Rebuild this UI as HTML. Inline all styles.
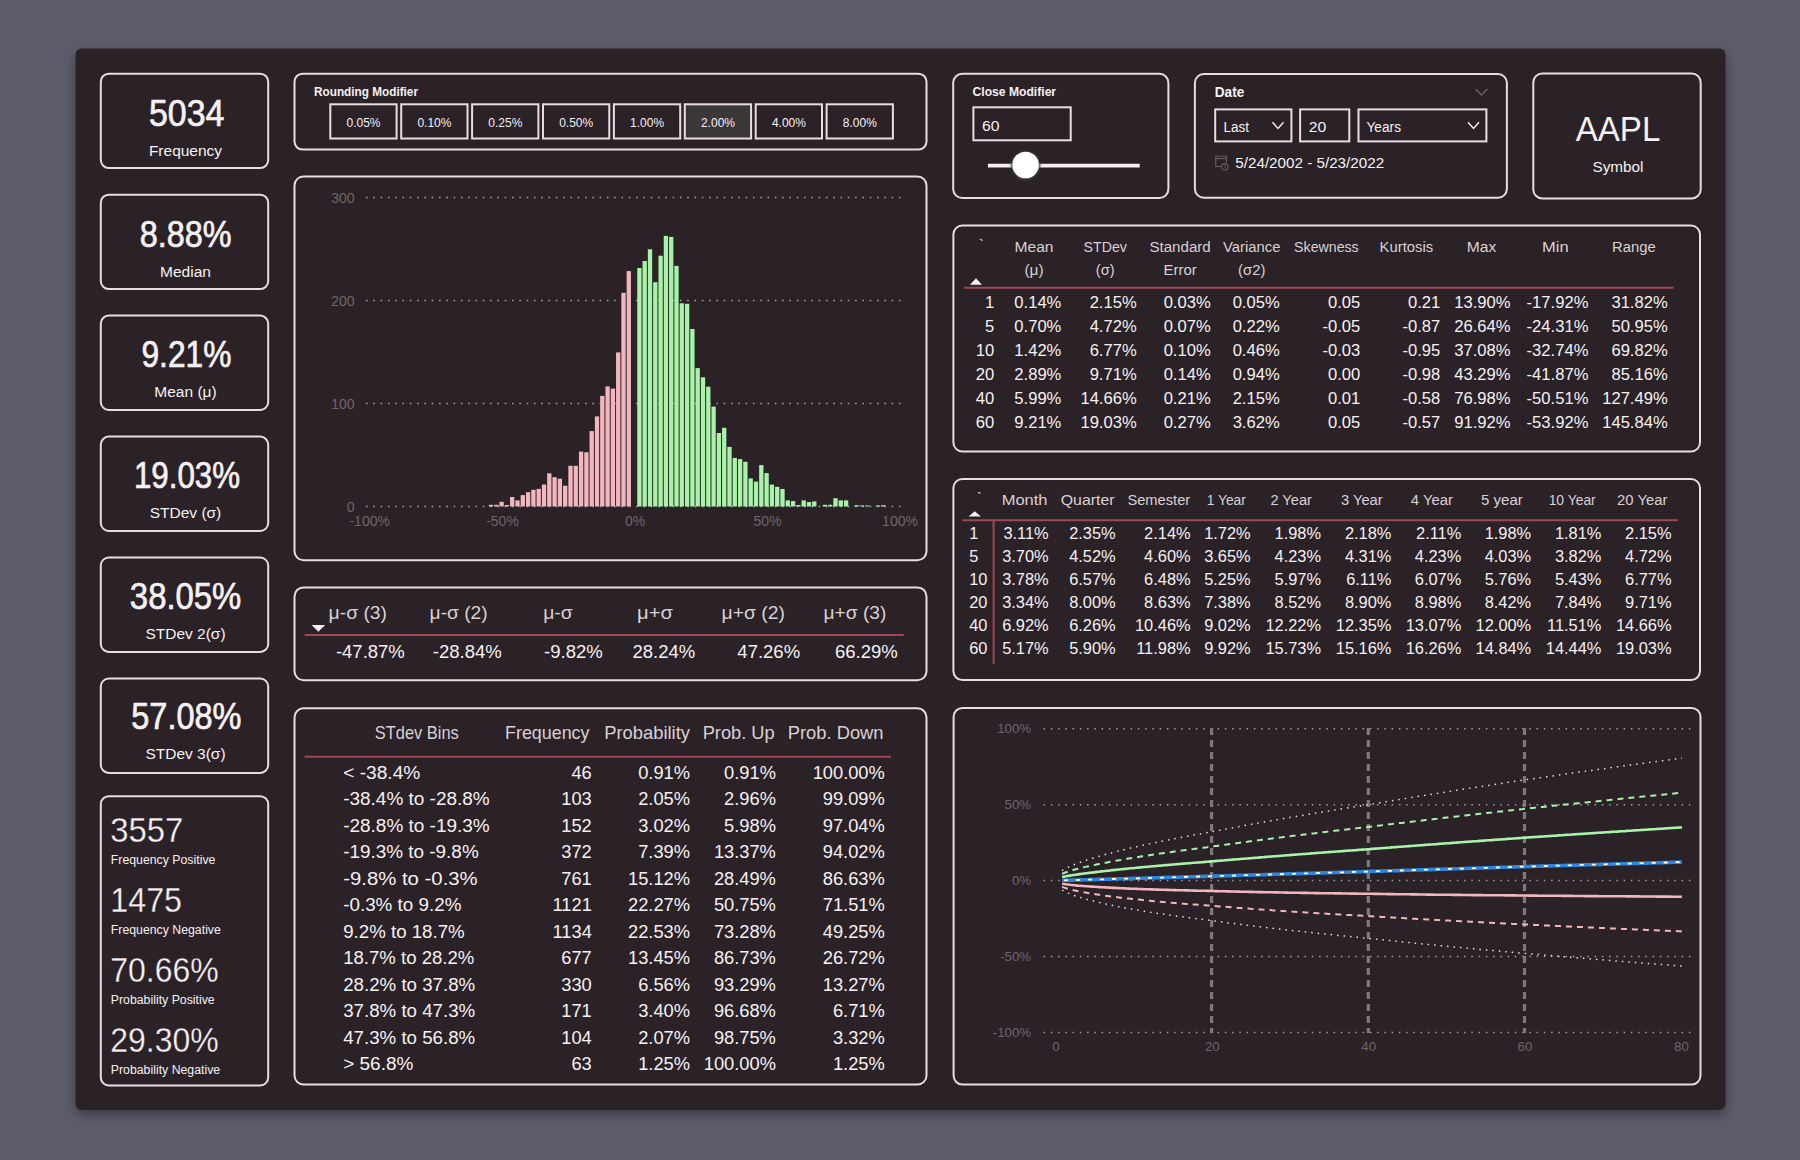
<!DOCTYPE html>
<html><head><meta charset="utf-8"><title>Dashboard</title>
<style>
html,body{margin:0;padding:0;background:#5c5b6a;width:1800px;height:1160px;overflow:hidden}
svg{display:block;font-family:"Liberation Sans",sans-serif}
</style></head><body>
<svg width="1800" height="1160" viewBox="0 0 1800 1160">
<defs><filter id="sh" x="-5%" y="-5%" width="110%" height="115%"><feDropShadow dx="0" dy="5" stdDeviation="6" flood-color="#000" flood-opacity="0.35"/></filter><filter id="bl" x="-30%" y="-30%" width="160%" height="160%"><feGaussianBlur stdDeviation="1.3"/></filter></defs>
<rect x="75.5" y="48.5" width="1650" height="1061.5" rx="6" fill="#2c2027" filter="url(#sh)"/>
<rect x="100.8" y="73.7" width="167.4" height="94.4" rx="8" fill="none" stroke="#e9dde3" stroke-width="2"/>
<text x="186.7" y="126.0" font-size="36.5" text-anchor="middle" textLength="75.3" lengthAdjust="spacingAndGlyphs" fill="#f6f1f4" stroke="#f6f1f4" stroke-width="0.7">5034</text>
<text x="185.5" y="156.0" font-size="15.5" text-anchor="middle" fill="#f6f1f4">Frequency</text>
<rect x="100.8" y="194.7" width="167.4" height="94.4" rx="8" fill="none" stroke="#e9dde3" stroke-width="2"/>
<text x="185.6" y="247.0" font-size="36.5" text-anchor="middle" textLength="91.8" lengthAdjust="spacingAndGlyphs" fill="#f6f1f4" stroke="#f6f1f4" stroke-width="0.7">8.88%</text>
<text x="185.5" y="277.0" font-size="15.5" text-anchor="middle" fill="#f6f1f4">Median</text>
<rect x="100.8" y="315.6" width="167.4" height="94.4" rx="8" fill="none" stroke="#e9dde3" stroke-width="2"/>
<text x="186.4" y="367.2" font-size="36.5" text-anchor="middle" textLength="89.9" lengthAdjust="spacingAndGlyphs" fill="#f6f1f4" stroke="#f6f1f4" stroke-width="0.7">9.21%</text>
<text x="185.5" y="397.2" font-size="15.5" text-anchor="middle" fill="#f6f1f4">Mean (μ)</text>
<rect x="100.8" y="436.6" width="167.4" height="94.4" rx="8" fill="none" stroke="#e9dde3" stroke-width="2"/>
<text x="187.0" y="487.9" font-size="36.5" text-anchor="middle" textLength="106.1" lengthAdjust="spacingAndGlyphs" fill="#f6f1f4" stroke="#f6f1f4" stroke-width="0.7">19.03%</text>
<text x="185.5" y="517.9" font-size="15.5" text-anchor="middle" fill="#f6f1f4">STDev (σ)</text>
<rect x="100.8" y="557.5" width="167.4" height="94.4" rx="8" fill="none" stroke="#e9dde3" stroke-width="2"/>
<text x="185.6" y="608.7" font-size="36.5" text-anchor="middle" textLength="111.5" lengthAdjust="spacingAndGlyphs" fill="#f6f1f4" stroke="#f6f1f4" stroke-width="0.7">38.05%</text>
<text x="185.5" y="638.7" font-size="15.5" text-anchor="middle" fill="#f6f1f4">STDev 2(σ)</text>
<rect x="100.8" y="678.5" width="167.4" height="94.4" rx="8" fill="none" stroke="#e9dde3" stroke-width="2"/>
<text x="186.4" y="729.0" font-size="36.5" text-anchor="middle" textLength="110.2" lengthAdjust="spacingAndGlyphs" fill="#f6f1f4" stroke="#f6f1f4" stroke-width="0.7">57.08%</text>
<text x="185.5" y="759.0" font-size="15.5" text-anchor="middle" fill="#f6f1f4">STDev 3(σ)</text>
<rect x="100.8" y="796.2" width="167.4" height="289.3" rx="8" fill="none" stroke="#e9dde3" stroke-width="2"/>
<text x="110.3" y="842.2" font-size="35.5" textLength="73.1" lengthAdjust="spacingAndGlyphs" fill="#f6f1f4" stroke="#2c2027" stroke-width="0.3">3557</text>
<text x="110.8" y="864.0" font-size="12.3" fill="#f6f1f4">Frequency Positive</text>
<text x="110.3" y="912.1" font-size="35.5" textLength="71.7" lengthAdjust="spacingAndGlyphs" fill="#f6f1f4" stroke="#2c2027" stroke-width="0.3">1475</text>
<text x="110.8" y="933.9" font-size="12.3" fill="#f6f1f4">Frequency Negative</text>
<text x="110.3" y="982.0" font-size="35.5" textLength="108.4" lengthAdjust="spacingAndGlyphs" fill="#f6f1f4" stroke="#2c2027" stroke-width="0.3">70.66%</text>
<text x="110.8" y="1003.8" font-size="12.3" fill="#f6f1f4">Probability Positive</text>
<text x="110.3" y="1051.9" font-size="35.5" textLength="108.4" lengthAdjust="spacingAndGlyphs" fill="#f6f1f4" stroke="#2c2027" stroke-width="0.3">29.30%</text>
<text x="110.8" y="1073.7" font-size="12.3" fill="#f6f1f4">Probability Negative</text>
<rect x="294.5" y="73.7" width="632.0" height="75.9" rx="8" fill="none" stroke="#e9dde3" stroke-width="2"/>
<text x="314.0" y="95.7" font-size="13.5" font-weight="bold" textLength="104.0" lengthAdjust="spacingAndGlyphs" fill="#f6f1f4" class="din">Rounding Modifier</text>
<rect x="330.3" y="104.3" width="66.3" height="34.2" fill="none" stroke="#e9dde3" stroke-width="2"/>
<text x="363.5" y="127.2" font-size="13.5" text-anchor="middle" textLength="34.0" lengthAdjust="spacingAndGlyphs" fill="#f6f1f4" class="din">0.05%</text>
<rect x="401.2" y="104.3" width="66.3" height="34.2" fill="none" stroke="#e9dde3" stroke-width="2"/>
<text x="434.4" y="127.2" font-size="13.5" text-anchor="middle" textLength="34.0" lengthAdjust="spacingAndGlyphs" fill="#f6f1f4" class="din">0.10%</text>
<rect x="472.1" y="104.3" width="66.3" height="34.2" fill="none" stroke="#e9dde3" stroke-width="2"/>
<text x="505.3" y="127.2" font-size="13.5" text-anchor="middle" textLength="34.0" lengthAdjust="spacingAndGlyphs" fill="#f6f1f4" class="din">0.25%</text>
<rect x="543.0" y="104.3" width="66.3" height="34.2" fill="none" stroke="#e9dde3" stroke-width="2"/>
<text x="576.2" y="127.2" font-size="13.5" text-anchor="middle" textLength="34.0" lengthAdjust="spacingAndGlyphs" fill="#f6f1f4" class="din">0.50%</text>
<rect x="613.9" y="104.3" width="66.3" height="34.2" fill="none" stroke="#e9dde3" stroke-width="2"/>
<text x="647.1" y="127.2" font-size="13.5" text-anchor="middle" textLength="34.0" lengthAdjust="spacingAndGlyphs" fill="#f6f1f4" class="din">1.00%</text>
<rect x="684.8" y="104.3" width="66.3" height="34.2" fill="#3b3739" stroke="#e9dde3" stroke-width="2"/>
<text x="718.0" y="127.2" font-size="13.5" text-anchor="middle" textLength="34.0" lengthAdjust="spacingAndGlyphs" fill="#f6f1f4" class="din">2.00%</text>
<rect x="755.7" y="104.3" width="66.3" height="34.2" fill="none" stroke="#e9dde3" stroke-width="2"/>
<text x="788.9" y="127.2" font-size="13.5" text-anchor="middle" textLength="34.0" lengthAdjust="spacingAndGlyphs" fill="#f6f1f4" class="din">4.00%</text>
<rect x="826.6" y="104.3" width="66.3" height="34.2" fill="none" stroke="#e9dde3" stroke-width="2"/>
<text x="859.8" y="127.2" font-size="13.5" text-anchor="middle" textLength="34.0" lengthAdjust="spacingAndGlyphs" fill="#f6f1f4" class="din">8.00%</text>
<rect x="953.2" y="73.8" width="215.2" height="124.2" rx="9" fill="none" stroke="#e9dde3" stroke-width="2"/>
<text x="972.6" y="95.8" font-size="13.5" font-weight="bold" textLength="83.5" lengthAdjust="spacingAndGlyphs" fill="#f6f1f4" class="din">Close Modifier</text>
<rect x="973.4" y="107.3" width="97.3" height="33" fill="none" stroke="#e9dde3" stroke-width="2"/>
<text x="982.0" y="130.6" font-size="15.5" textLength="17.5" lengthAdjust="spacingAndGlyphs" fill="#f6f1f4" class="din">60</text>
<line x1="987.9" y1="165.6" x2="1139.7" y2="165.6" stroke="#f6f1f4" stroke-width="3.6"/>
<circle cx="1025.6" cy="165.6" r="14.6" fill="#3e3a3c" filter="url(#bl)"/>
<circle cx="1025.6" cy="165" r="13.3" fill="#ffffff"/>
<rect x="1194.9" y="74.0" width="312.0" height="123.8" rx="9" fill="none" stroke="#e9dde3" stroke-width="2"/>
<text x="1214.8" y="96.9" font-size="14.5" font-weight="bold" textLength="29.5" lengthAdjust="spacingAndGlyphs" fill="#f6f1f4" class="din">Date</text>
<polyline points="1475.5,89 1481.4,95 1487.3,89" fill="none" stroke="#6a6068" stroke-width="1.3"/>
<rect x="1215.2" y="109.4" width="76.2" height="32" fill="none" stroke="#e9dde3" stroke-width="2"/>
<rect x="1300.1" y="109.4" width="49.2" height="32" fill="none" stroke="#e9dde3" stroke-width="2"/>
<rect x="1358.5" y="109.4" width="127.9" height="32" fill="none" stroke="#e9dde3" stroke-width="2"/>
<text x="1223.5" y="131.7" font-size="15.5" textLength="25.5" lengthAdjust="spacingAndGlyphs" fill="#f6f1f4" class="din">Last</text>
<text x="1308.8" y="131.7" font-size="15.5" textLength="17.5" lengthAdjust="spacingAndGlyphs" fill="#f6f1f4" class="din">20</text>
<text x="1366.5" y="131.7" font-size="15.5" textLength="34.5" lengthAdjust="spacingAndGlyphs" fill="#f6f1f4" class="din">Years</text>
<polyline points="1272.5,122.2 1278.0,128.5 1283.5,122.2" fill="none" stroke="#f6f1f4" stroke-width="1.4"/>
<polyline points="1468.0,122.2 1473.5,128.5 1479.0,122.2" fill="none" stroke="#f6f1f4" stroke-width="1.4"/>
<text x="1235.3" y="168.0" font-size="15.5" textLength="148.8" lengthAdjust="spacingAndGlyphs" fill="#f6f1f4" class="din">5/24/2002 - 5/23/2022</text>
<g fill="none" stroke="#6a6068" stroke-width="1.1"><path d="M1223,166.5 H1215.8 V156.3 H1226.4 V162.5"/><line x1="1215.8" y1="158.6" x2="1226.4" y2="158.6"/><circle cx="1224.8" cy="166.8" r="3.2" fill="#2c2027"/><path d="M1224.8,165 V167 L1226,168" stroke-width="0.9"/></g>
<rect x="1533.3" y="73.5" width="167.4" height="124.9" rx="9" fill="none" stroke="#e9dde3" stroke-width="2"/>
<text x="1618.0" y="140.8" font-size="35" text-anchor="middle" textLength="84.7" lengthAdjust="spacingAndGlyphs" fill="#f6f1f4">AAPL</text>
<text x="1618.0" y="171.9" font-size="15.3" text-anchor="middle" textLength="51.1" lengthAdjust="spacingAndGlyphs" fill="#f6f1f4">Symbol</text>
<rect x="294.5" y="176.5" width="632.0" height="383.8" rx="9" fill="none" stroke="#e9dde3" stroke-width="2"/>
<text x="354.5" y="202.7" font-size="14" text-anchor="end" fill="#6f656c">300</text>
<line x1="366" y1="197.5" x2="902" y2="197.5" stroke="#a59ca3" stroke-width="1.6" stroke-dasharray="1.6 5.7"/>
<text x="354.5" y="305.7" font-size="14" text-anchor="end" fill="#6f656c">200</text>
<line x1="366" y1="300.5" x2="902" y2="300.5" stroke="#a59ca3" stroke-width="1.6" stroke-dasharray="1.6 5.7"/>
<text x="354.5" y="408.7" font-size="14" text-anchor="end" fill="#6f656c">100</text>
<line x1="366" y1="403.5" x2="902" y2="403.5" stroke="#a59ca3" stroke-width="1.6" stroke-dasharray="1.6 5.7"/>
<text x="354.5" y="511.7" font-size="14" text-anchor="end" fill="#6f656c">0</text>
<line x1="366" y1="506.5" x2="902" y2="506.5" stroke="#a59ca3" stroke-width="1.6" stroke-dasharray="1.6 5.7"/>
<text x="369.7" y="526.4" font-size="14" text-anchor="middle" fill="#6f656c">-100%</text>
<text x="502.5" y="526.4" font-size="14" text-anchor="middle" fill="#6f656c">-50%</text>
<text x="635.0" y="526.4" font-size="14" text-anchor="middle" fill="#6f656c">0%</text>
<text x="767.5" y="526.4" font-size="14" text-anchor="middle" fill="#6f656c">50%</text>
<text x="900.0" y="526.4" font-size="14" text-anchor="middle" fill="#6f656c">100%</text>
<g><rect x="488.85" y="504.8" width="4.3" height="1.7" fill="#f2b6bf"/><rect x="494.15" y="504.8" width="4.3" height="1.7" fill="#f2b6bf"/><rect x="499.45" y="501.8" width="4.3" height="4.7" fill="#f2b6bf"/><rect x="504.75" y="505.0" width="4.3" height="1.5" fill="#f2b6bf"/><rect x="510.05" y="497.0" width="4.3" height="9.5" fill="#f2b6bf"/><rect x="515.35" y="500.4" width="4.3" height="6.1" fill="#f2b6bf"/><rect x="520.65" y="495.1" width="4.3" height="11.4" fill="#f2b6bf"/><rect x="525.95" y="492.2" width="4.3" height="14.3" fill="#f2b6bf"/><rect x="531.25" y="489.8" width="4.3" height="16.7" fill="#f2b6bf"/><rect x="536.55" y="488.9" width="4.3" height="17.6" fill="#f2b6bf"/><rect x="541.85" y="484.5" width="4.3" height="22.0" fill="#f2b6bf"/><rect x="547.15" y="473.3" width="4.3" height="33.2" fill="#f2b6bf"/><rect x="552.45" y="477.2" width="4.3" height="29.3" fill="#f2b6bf"/><rect x="557.75" y="478.7" width="4.3" height="27.8" fill="#f2b6bf"/><rect x="563.05" y="485.7" width="4.3" height="20.8" fill="#f2b6bf"/><rect x="568.35" y="465.8" width="4.3" height="40.7" fill="#f2b6bf"/><rect x="573.65" y="465.8" width="4.3" height="40.7" fill="#f2b6bf"/><rect x="578.95" y="451.6" width="4.3" height="54.9" fill="#f2b6bf"/><rect x="584.25" y="452.3" width="4.3" height="54.2" fill="#f2b6bf"/><rect x="589.55" y="431.1" width="4.3" height="75.4" fill="#f2b6bf"/><rect x="594.85" y="416.4" width="4.3" height="90.1" fill="#f2b6bf"/><rect x="600.15" y="395.9" width="4.3" height="110.6" fill="#f2b6bf"/><rect x="605.45" y="386.4" width="4.3" height="120.1" fill="#f2b6bf"/><rect x="610.75" y="388.6" width="4.3" height="117.9" fill="#f2b6bf"/><rect x="616.05" y="352.4" width="4.3" height="154.1" fill="#f2b6bf"/><rect x="621.35" y="292.8" width="4.3" height="213.7" fill="#f2b6bf"/><rect x="626.65" y="271.1" width="4.3" height="235.4" fill="#f2b6bf"/><rect x="637.25" y="268.0" width="4.3" height="238.5" fill="#a9f2a9"/><rect x="642.55" y="261.0" width="4.3" height="245.5" fill="#a9f2a9"/><rect x="647.85" y="249.3" width="4.3" height="257.2" fill="#a9f2a9"/><rect x="653.15" y="282.2" width="4.3" height="224.3" fill="#a9f2a9"/><rect x="658.45" y="255.7" width="4.3" height="250.8" fill="#a9f2a9"/><rect x="663.75" y="235.9" width="4.3" height="270.6" fill="#a9f2a9"/><rect x="669.05" y="236.9" width="4.3" height="269.6" fill="#a9f2a9"/><rect x="674.35" y="265.9" width="4.3" height="240.6" fill="#a9f2a9"/><rect x="679.65" y="303.3" width="4.3" height="203.2" fill="#a9f2a9"/><rect x="684.95" y="303.8" width="4.3" height="202.7" fill="#a9f2a9"/><rect x="690.25" y="329.0" width="4.3" height="177.5" fill="#a9f2a9"/><rect x="695.55" y="368.1" width="4.3" height="138.4" fill="#a9f2a9"/><rect x="700.85" y="377.3" width="4.3" height="129.2" fill="#a9f2a9"/><rect x="706.15" y="386.7" width="4.3" height="119.8" fill="#a9f2a9"/><rect x="711.45" y="406.6" width="4.3" height="99.9" fill="#a9f2a9"/><rect x="716.75" y="433.0" width="4.3" height="73.5" fill="#a9f2a9"/><rect x="722.05" y="427.8" width="4.3" height="78.7" fill="#a9f2a9"/><rect x="727.35" y="446.9" width="4.3" height="59.6" fill="#a9f2a9"/><rect x="732.65" y="457.9" width="4.3" height="48.6" fill="#a9f2a9"/><rect x="737.95" y="459.1" width="4.3" height="47.4" fill="#a9f2a9"/><rect x="743.25" y="461.8" width="4.3" height="44.7" fill="#a9f2a9"/><rect x="748.55" y="478.4" width="4.3" height="28.1" fill="#a9f2a9"/><rect x="753.85" y="481.6" width="4.3" height="24.9" fill="#a9f2a9"/><rect x="759.15" y="465.1" width="4.3" height="41.4" fill="#a9f2a9"/><rect x="764.45" y="473.1" width="4.3" height="33.4" fill="#a9f2a9"/><rect x="769.75" y="484.6" width="4.3" height="21.9" fill="#a9f2a9"/><rect x="775.05" y="486.8" width="4.3" height="19.7" fill="#a9f2a9"/><rect x="780.35" y="489.0" width="4.3" height="17.5" fill="#a9f2a9"/><rect x="785.65" y="500.4" width="4.3" height="6.1" fill="#a9f2a9"/><rect x="790.95" y="501.1" width="4.3" height="5.4" fill="#a9f2a9"/><rect x="796.25" y="505.0" width="4.3" height="1.5" fill="#a9f2a9"/><rect x="801.55" y="500.4" width="4.3" height="6.1" fill="#a9f2a9"/><rect x="806.85" y="502.1" width="4.3" height="4.4" fill="#a9f2a9"/><rect x="812.15" y="501.4" width="4.3" height="5.1" fill="#a9f2a9"/><rect x="822.75" y="504.8" width="4.3" height="1.7" fill="#a9f2a9"/><rect x="828.05" y="504.8" width="4.3" height="1.7" fill="#a9f2a9"/><rect x="833.35" y="498.2" width="4.3" height="8.3" fill="#a9f2a9"/><rect x="838.65" y="500.4" width="4.3" height="6.1" fill="#a9f2a9"/><rect x="843.95" y="500.4" width="4.3" height="6.1" fill="#a9f2a9"/><rect x="854.55" y="505.2" width="4.3" height="1.3" fill="#a9f2a9"/><rect x="859.85" y="505.5" width="4.3" height="1.0" fill="#a9f2a9"/><rect x="865.15" y="505.5" width="4.3" height="1.0" fill="#a9f2a9"/><rect x="875.75" y="505.5" width="4.3" height="1.0" fill="#a9f2a9"/><rect x="881.05" y="505.2" width="4.3" height="1.3" fill="#a9f2a9"/></g>
<rect x="294.5" y="587.4" width="632.0" height="92.9" rx="9" fill="none" stroke="#e9dde3" stroke-width="2"/>
<line x1="304.7" y1="635" x2="903.7" y2="635" stroke="#a04656" stroke-width="2"/>
<polygon points="311.6,625 325.2,625 318.4,631.7" fill="#f6f1f4"/>
<text x="328.6" y="618.9" font-size="18.5" textLength="58.4" lengthAdjust="spacingAndGlyphs" fill="#d9d1d5">μ-σ (3)</text>
<text x="429.6" y="618.9" font-size="18.5" textLength="58.1" lengthAdjust="spacingAndGlyphs" fill="#d9d1d5">μ-σ (2)</text>
<text x="543.2" y="618.9" font-size="18.5" textLength="29.5" lengthAdjust="spacingAndGlyphs" fill="#d9d1d5">μ-σ</text>
<text x="637.0" y="618.9" font-size="18.5" textLength="35.9" lengthAdjust="spacingAndGlyphs" fill="#d9d1d5">μ+σ</text>
<text x="721.6" y="618.9" font-size="18.5" textLength="63.3" lengthAdjust="spacingAndGlyphs" fill="#d9d1d5">μ+σ (2)</text>
<text x="823.6" y="618.9" font-size="18.5" textLength="62.7" lengthAdjust="spacingAndGlyphs" fill="#d9d1d5">μ+σ (3)</text>
<text x="404.8" y="658.0" font-size="18.5" text-anchor="end" fill="#f6f1f4">-47.87%</text>
<text x="501.7" y="658.0" font-size="18.5" text-anchor="end" fill="#f6f1f4">-28.84%</text>
<text x="602.7" y="658.0" font-size="18.5" text-anchor="end" fill="#f6f1f4">-9.82%</text>
<text x="695.2" y="658.0" font-size="18.5" text-anchor="end" fill="#f6f1f4">28.24%</text>
<text x="800.1" y="658.0" font-size="18.5" text-anchor="end" fill="#f6f1f4">47.26%</text>
<text x="897.8" y="658.0" font-size="18.5" text-anchor="end" fill="#f6f1f4">66.29%</text>
<rect x="294.5" y="708.3" width="632.0" height="376.2" rx="9" fill="none" stroke="#e9dde3" stroke-width="2"/>
<line x1="304.7" y1="756.8" x2="891" y2="756.8" stroke="#a04656" stroke-width="2"/>
<text x="374.8" y="738.5" font-size="17.8" textLength="84.0" lengthAdjust="spacingAndGlyphs" fill="#d9d1d5">STdev Bins</text>
<text x="505.0" y="738.5" font-size="17.8" textLength="84.5" lengthAdjust="spacingAndGlyphs" fill="#d9d1d5">Frequency</text>
<text x="604.2" y="738.5" font-size="17.8" textLength="85.8" lengthAdjust="spacingAndGlyphs" fill="#d9d1d5">Probability</text>
<text x="702.7" y="738.5" font-size="17.8" textLength="72.0" lengthAdjust="spacingAndGlyphs" fill="#d9d1d5">Prob. Up</text>
<text x="787.7" y="738.5" font-size="17.8" textLength="95.9" lengthAdjust="spacingAndGlyphs" fill="#d9d1d5">Prob. Down</text>
<text x="343.2" y="778.5" font-size="18.3" textLength="77.2" lengthAdjust="spacingAndGlyphs" fill="#f6f1f4">&lt; -38.4%</text>
<text x="591.8" y="778.5" font-size="18.3" text-anchor="end" fill="#f6f1f4">46</text>
<text x="690.0" y="778.5" font-size="18.3" text-anchor="end" fill="#f6f1f4">0.91%</text>
<text x="775.9" y="778.5" font-size="18.3" text-anchor="end" fill="#f6f1f4">0.91%</text>
<text x="884.8" y="778.5" font-size="18.3" text-anchor="end" fill="#f6f1f4">100.00%</text>
<text x="343.2" y="805.0" font-size="18.3" textLength="146.5" lengthAdjust="spacingAndGlyphs" fill="#f6f1f4">-38.4% to -28.8%</text>
<text x="591.8" y="805.0" font-size="18.3" text-anchor="end" fill="#f6f1f4">103</text>
<text x="690.0" y="805.0" font-size="18.3" text-anchor="end" fill="#f6f1f4">2.05%</text>
<text x="775.9" y="805.0" font-size="18.3" text-anchor="end" fill="#f6f1f4">2.96%</text>
<text x="884.8" y="805.0" font-size="18.3" text-anchor="end" fill="#f6f1f4">99.09%</text>
<text x="343.2" y="831.5" font-size="18.3" textLength="146.5" lengthAdjust="spacingAndGlyphs" fill="#f6f1f4">-28.8% to -19.3%</text>
<text x="591.8" y="831.5" font-size="18.3" text-anchor="end" fill="#f6f1f4">152</text>
<text x="690.0" y="831.5" font-size="18.3" text-anchor="end" fill="#f6f1f4">3.02%</text>
<text x="775.9" y="831.5" font-size="18.3" text-anchor="end" fill="#f6f1f4">5.98%</text>
<text x="884.8" y="831.5" font-size="18.3" text-anchor="end" fill="#f6f1f4">97.04%</text>
<text x="343.2" y="858.1" font-size="18.3" textLength="135.5" lengthAdjust="spacingAndGlyphs" fill="#f6f1f4">-19.3% to -9.8%</text>
<text x="591.8" y="858.1" font-size="18.3" text-anchor="end" fill="#f6f1f4">372</text>
<text x="690.0" y="858.1" font-size="18.3" text-anchor="end" fill="#f6f1f4">7.39%</text>
<text x="775.9" y="858.1" font-size="18.3" text-anchor="end" fill="#f6f1f4">13.37%</text>
<text x="884.8" y="858.1" font-size="18.3" text-anchor="end" fill="#f6f1f4">94.02%</text>
<text x="343.2" y="884.6" font-size="18.3" textLength="134.5" lengthAdjust="spacingAndGlyphs" fill="#f6f1f4">-9.8% to -0.3%</text>
<text x="591.8" y="884.6" font-size="18.3" text-anchor="end" fill="#f6f1f4">761</text>
<text x="690.0" y="884.6" font-size="18.3" text-anchor="end" fill="#f6f1f4">15.12%</text>
<text x="775.9" y="884.6" font-size="18.3" text-anchor="end" fill="#f6f1f4">28.49%</text>
<text x="884.8" y="884.6" font-size="18.3" text-anchor="end" fill="#f6f1f4">86.63%</text>
<text x="343.2" y="911.1" font-size="18.3" textLength="118.2" lengthAdjust="spacingAndGlyphs" fill="#f6f1f4">-0.3% to 9.2%</text>
<text x="591.8" y="911.1" font-size="18.3" text-anchor="end" fill="#f6f1f4">1121</text>
<text x="690.0" y="911.1" font-size="18.3" text-anchor="end" fill="#f6f1f4">22.27%</text>
<text x="775.9" y="911.1" font-size="18.3" text-anchor="end" fill="#f6f1f4">50.75%</text>
<text x="884.8" y="911.1" font-size="18.3" text-anchor="end" fill="#f6f1f4">71.51%</text>
<text x="343.2" y="937.6" font-size="18.3" textLength="121.5" lengthAdjust="spacingAndGlyphs" fill="#f6f1f4">9.2% to 18.7%</text>
<text x="591.8" y="937.6" font-size="18.3" text-anchor="end" fill="#f6f1f4">1134</text>
<text x="690.0" y="937.6" font-size="18.3" text-anchor="end" fill="#f6f1f4">22.53%</text>
<text x="775.9" y="937.6" font-size="18.3" text-anchor="end" fill="#f6f1f4">73.28%</text>
<text x="884.8" y="937.6" font-size="18.3" text-anchor="end" fill="#f6f1f4">49.25%</text>
<text x="343.2" y="964.1" font-size="18.3" textLength="131.1" lengthAdjust="spacingAndGlyphs" fill="#f6f1f4">18.7% to 28.2%</text>
<text x="591.8" y="964.1" font-size="18.3" text-anchor="end" fill="#f6f1f4">677</text>
<text x="690.0" y="964.1" font-size="18.3" text-anchor="end" fill="#f6f1f4">13.45%</text>
<text x="775.9" y="964.1" font-size="18.3" text-anchor="end" fill="#f6f1f4">86.73%</text>
<text x="884.8" y="964.1" font-size="18.3" text-anchor="end" fill="#f6f1f4">26.72%</text>
<text x="343.2" y="990.7" font-size="18.3" textLength="132.0" lengthAdjust="spacingAndGlyphs" fill="#f6f1f4">28.2% to 37.8%</text>
<text x="591.8" y="990.7" font-size="18.3" text-anchor="end" fill="#f6f1f4">330</text>
<text x="690.0" y="990.7" font-size="18.3" text-anchor="end" fill="#f6f1f4">6.56%</text>
<text x="775.9" y="990.7" font-size="18.3" text-anchor="end" fill="#f6f1f4">93.29%</text>
<text x="884.8" y="990.7" font-size="18.3" text-anchor="end" fill="#f6f1f4">13.27%</text>
<text x="343.2" y="1017.2" font-size="18.3" textLength="132.0" lengthAdjust="spacingAndGlyphs" fill="#f6f1f4">37.8% to 47.3%</text>
<text x="591.8" y="1017.2" font-size="18.3" text-anchor="end" fill="#f6f1f4">171</text>
<text x="690.0" y="1017.2" font-size="18.3" text-anchor="end" fill="#f6f1f4">3.40%</text>
<text x="775.9" y="1017.2" font-size="18.3" text-anchor="end" fill="#f6f1f4">96.68%</text>
<text x="884.8" y="1017.2" font-size="18.3" text-anchor="end" fill="#f6f1f4">6.71%</text>
<text x="343.2" y="1043.7" font-size="18.3" textLength="132.0" lengthAdjust="spacingAndGlyphs" fill="#f6f1f4">47.3% to 56.8%</text>
<text x="591.8" y="1043.7" font-size="18.3" text-anchor="end" fill="#f6f1f4">104</text>
<text x="690.0" y="1043.7" font-size="18.3" text-anchor="end" fill="#f6f1f4">2.07%</text>
<text x="775.9" y="1043.7" font-size="18.3" text-anchor="end" fill="#f6f1f4">98.75%</text>
<text x="884.8" y="1043.7" font-size="18.3" text-anchor="end" fill="#f6f1f4">3.32%</text>
<text x="343.2" y="1070.2" font-size="18.3" textLength="70.2" lengthAdjust="spacingAndGlyphs" fill="#f6f1f4">&gt; 56.8%</text>
<text x="591.8" y="1070.2" font-size="18.3" text-anchor="end" fill="#f6f1f4">63</text>
<text x="690.0" y="1070.2" font-size="18.3" text-anchor="end" fill="#f6f1f4">1.25%</text>
<text x="775.9" y="1070.2" font-size="18.3" text-anchor="end" fill="#f6f1f4">100.00%</text>
<text x="884.8" y="1070.2" font-size="18.3" text-anchor="end" fill="#f6f1f4">1.25%</text>
<rect x="953.4" y="225.5" width="746.6" height="226.0" rx="9" fill="none" stroke="#e9dde3" stroke-width="2"/>
<line x1="964" y1="287.8" x2="1673.7" y2="287.8" stroke="#a04656" stroke-width="2"/>
<polygon points="969.9,284.7 982,284.7 976,278.3" fill="#f6f1f4"/>
<text x="979.0" y="250.0" font-size="14" fill="#f6f1f4">`</text>
<text x="1034.0" y="252.0" font-size="15.3" text-anchor="middle" textLength="38.9" lengthAdjust="spacingAndGlyphs" fill="#d9d1d5">Mean</text>
<text x="1034.0" y="274.7" font-size="15.3" text-anchor="middle" textLength="19.2" lengthAdjust="spacingAndGlyphs" fill="#d9d1d5">(μ)</text>
<text x="1105.2" y="252.0" font-size="15.3" text-anchor="middle" textLength="43.3" lengthAdjust="spacingAndGlyphs" fill="#d9d1d5">STDev</text>
<text x="1105.2" y="274.7" font-size="15.3" text-anchor="middle" textLength="18.8" lengthAdjust="spacingAndGlyphs" fill="#d9d1d5">(σ)</text>
<text x="1180.1" y="252.0" font-size="15.3" text-anchor="middle" textLength="61.3" lengthAdjust="spacingAndGlyphs" fill="#d9d1d5">Standard</text>
<text x="1180.1" y="274.7" font-size="15.3" text-anchor="middle" textLength="33.2" lengthAdjust="spacingAndGlyphs" fill="#d9d1d5">Error</text>
<text x="1251.7" y="252.0" font-size="15.3" text-anchor="middle" textLength="57.4" lengthAdjust="spacingAndGlyphs" fill="#d9d1d5">Variance</text>
<text x="1251.7" y="274.7" font-size="15.3" text-anchor="middle" textLength="27.3" lengthAdjust="spacingAndGlyphs" fill="#d9d1d5">(σ2)</text>
<text x="1326.4" y="252.0" font-size="15.3" text-anchor="middle" textLength="64.6" lengthAdjust="spacingAndGlyphs" fill="#d9d1d5">Skewness</text>
<text x="1406.4" y="252.0" font-size="15.3" text-anchor="middle" textLength="53.6" lengthAdjust="spacingAndGlyphs" fill="#d9d1d5">Kurtosis</text>
<text x="1481.5" y="252.0" font-size="15.3" text-anchor="middle" textLength="29.5" lengthAdjust="spacingAndGlyphs" fill="#d9d1d5">Max</text>
<text x="1555.4" y="252.0" font-size="15.3" text-anchor="middle" textLength="26.6" lengthAdjust="spacingAndGlyphs" fill="#d9d1d5">Min</text>
<text x="1633.9" y="252.0" font-size="15.3" text-anchor="middle" textLength="43.7" lengthAdjust="spacingAndGlyphs" fill="#d9d1d5">Range</text>
<text x="994.3" y="307.9" font-size="16.6" text-anchor="end" fill="#f6f1f4">1</text>
<text x="1061.4" y="307.9" font-size="16.6" text-anchor="end" fill="#f6f1f4">0.14%</text>
<text x="1136.7" y="307.9" font-size="16.6" text-anchor="end" fill="#f6f1f4">2.15%</text>
<text x="1210.7" y="307.9" font-size="16.6" text-anchor="end" fill="#f6f1f4">0.03%</text>
<text x="1279.7" y="307.9" font-size="16.6" text-anchor="end" fill="#f6f1f4">0.05%</text>
<text x="1360.3" y="307.9" font-size="16.6" text-anchor="end" fill="#f6f1f4">0.05</text>
<text x="1440.3" y="307.9" font-size="16.6" text-anchor="end" fill="#f6f1f4">0.21</text>
<text x="1510.5" y="307.9" font-size="16.6" text-anchor="end" fill="#f6f1f4">13.90%</text>
<text x="1588.4" y="307.9" font-size="16.6" text-anchor="end" fill="#f6f1f4">-17.92%</text>
<text x="1667.7" y="307.9" font-size="16.6" text-anchor="end" fill="#f6f1f4">31.82%</text>
<text x="994.3" y="332.0" font-size="16.6" text-anchor="end" fill="#f6f1f4">5</text>
<text x="1061.4" y="332.0" font-size="16.6" text-anchor="end" fill="#f6f1f4">0.70%</text>
<text x="1136.7" y="332.0" font-size="16.6" text-anchor="end" fill="#f6f1f4">4.72%</text>
<text x="1210.7" y="332.0" font-size="16.6" text-anchor="end" fill="#f6f1f4">0.07%</text>
<text x="1279.7" y="332.0" font-size="16.6" text-anchor="end" fill="#f6f1f4">0.22%</text>
<text x="1360.3" y="332.0" font-size="16.6" text-anchor="end" fill="#f6f1f4">-0.05</text>
<text x="1440.3" y="332.0" font-size="16.6" text-anchor="end" fill="#f6f1f4">-0.87</text>
<text x="1510.5" y="332.0" font-size="16.6" text-anchor="end" fill="#f6f1f4">26.64%</text>
<text x="1588.4" y="332.0" font-size="16.6" text-anchor="end" fill="#f6f1f4">-24.31%</text>
<text x="1667.7" y="332.0" font-size="16.6" text-anchor="end" fill="#f6f1f4">50.95%</text>
<text x="994.3" y="356.0" font-size="16.6" text-anchor="end" fill="#f6f1f4">10</text>
<text x="1061.4" y="356.0" font-size="16.6" text-anchor="end" fill="#f6f1f4">1.42%</text>
<text x="1136.7" y="356.0" font-size="16.6" text-anchor="end" fill="#f6f1f4">6.77%</text>
<text x="1210.7" y="356.0" font-size="16.6" text-anchor="end" fill="#f6f1f4">0.10%</text>
<text x="1279.7" y="356.0" font-size="16.6" text-anchor="end" fill="#f6f1f4">0.46%</text>
<text x="1360.3" y="356.0" font-size="16.6" text-anchor="end" fill="#f6f1f4">-0.03</text>
<text x="1440.3" y="356.0" font-size="16.6" text-anchor="end" fill="#f6f1f4">-0.95</text>
<text x="1510.5" y="356.0" font-size="16.6" text-anchor="end" fill="#f6f1f4">37.08%</text>
<text x="1588.4" y="356.0" font-size="16.6" text-anchor="end" fill="#f6f1f4">-32.74%</text>
<text x="1667.7" y="356.0" font-size="16.6" text-anchor="end" fill="#f6f1f4">69.82%</text>
<text x="994.3" y="380.1" font-size="16.6" text-anchor="end" fill="#f6f1f4">20</text>
<text x="1061.4" y="380.1" font-size="16.6" text-anchor="end" fill="#f6f1f4">2.89%</text>
<text x="1136.7" y="380.1" font-size="16.6" text-anchor="end" fill="#f6f1f4">9.71%</text>
<text x="1210.7" y="380.1" font-size="16.6" text-anchor="end" fill="#f6f1f4">0.14%</text>
<text x="1279.7" y="380.1" font-size="16.6" text-anchor="end" fill="#f6f1f4">0.94%</text>
<text x="1360.3" y="380.1" font-size="16.6" text-anchor="end" fill="#f6f1f4">0.00</text>
<text x="1440.3" y="380.1" font-size="16.6" text-anchor="end" fill="#f6f1f4">-0.98</text>
<text x="1510.5" y="380.1" font-size="16.6" text-anchor="end" fill="#f6f1f4">43.29%</text>
<text x="1588.4" y="380.1" font-size="16.6" text-anchor="end" fill="#f6f1f4">-41.87%</text>
<text x="1667.7" y="380.1" font-size="16.6" text-anchor="end" fill="#f6f1f4">85.16%</text>
<text x="994.3" y="404.2" font-size="16.6" text-anchor="end" fill="#f6f1f4">40</text>
<text x="1061.4" y="404.2" font-size="16.6" text-anchor="end" fill="#f6f1f4">5.99%</text>
<text x="1136.7" y="404.2" font-size="16.6" text-anchor="end" fill="#f6f1f4">14.66%</text>
<text x="1210.7" y="404.2" font-size="16.6" text-anchor="end" fill="#f6f1f4">0.21%</text>
<text x="1279.7" y="404.2" font-size="16.6" text-anchor="end" fill="#f6f1f4">2.15%</text>
<text x="1360.3" y="404.2" font-size="16.6" text-anchor="end" fill="#f6f1f4">0.01</text>
<text x="1440.3" y="404.2" font-size="16.6" text-anchor="end" fill="#f6f1f4">-0.58</text>
<text x="1510.5" y="404.2" font-size="16.6" text-anchor="end" fill="#f6f1f4">76.98%</text>
<text x="1588.4" y="404.2" font-size="16.6" text-anchor="end" fill="#f6f1f4">-50.51%</text>
<text x="1667.7" y="404.2" font-size="16.6" text-anchor="end" fill="#f6f1f4">127.49%</text>
<text x="994.3" y="428.2" font-size="16.6" text-anchor="end" fill="#f6f1f4">60</text>
<text x="1061.4" y="428.2" font-size="16.6" text-anchor="end" fill="#f6f1f4">9.21%</text>
<text x="1136.7" y="428.2" font-size="16.6" text-anchor="end" fill="#f6f1f4">19.03%</text>
<text x="1210.7" y="428.2" font-size="16.6" text-anchor="end" fill="#f6f1f4">0.27%</text>
<text x="1279.7" y="428.2" font-size="16.6" text-anchor="end" fill="#f6f1f4">3.62%</text>
<text x="1360.3" y="428.2" font-size="16.6" text-anchor="end" fill="#f6f1f4">0.05</text>
<text x="1440.3" y="428.2" font-size="16.6" text-anchor="end" fill="#f6f1f4">-0.57</text>
<text x="1510.5" y="428.2" font-size="16.6" text-anchor="end" fill="#f6f1f4">91.92%</text>
<text x="1588.4" y="428.2" font-size="16.6" text-anchor="end" fill="#f6f1f4">-53.92%</text>
<text x="1667.7" y="428.2" font-size="16.6" text-anchor="end" fill="#f6f1f4">145.84%</text>
<rect x="953.4" y="479.0" width="746.6" height="201.1" rx="9" fill="none" stroke="#e9dde3" stroke-width="2"/>
<line x1="962.3" y1="520.2" x2="1678.1" y2="520.2" stroke="#a04656" stroke-width="2"/>
<line x1="993.6" y1="520.2" x2="993.6" y2="664.2" stroke="#a04656" stroke-width="2"/>
<polygon points="968.6,516.4 980.9,516.4 974.75,511.2" fill="#f6f1f4"/>
<text x="977.0" y="503.0" font-size="14" fill="#f6f1f4">`</text>
<text x="1024.6" y="504.8" font-size="15.5" text-anchor="middle" textLength="45.9" lengthAdjust="spacingAndGlyphs" fill="#d9d1d5">Month</text>
<text x="1087.7" y="504.8" font-size="15.5" text-anchor="middle" textLength="53.9" lengthAdjust="spacingAndGlyphs" fill="#d9d1d5">Quarter</text>
<text x="1158.8" y="504.8" font-size="15.5" text-anchor="middle" textLength="62.8" lengthAdjust="spacingAndGlyphs" fill="#d9d1d5">Semester</text>
<text x="1226.3" y="504.8" font-size="15.5" text-anchor="middle" textLength="39.3" lengthAdjust="spacingAndGlyphs" fill="#d9d1d5">1 Year</text>
<text x="1291.2" y="504.8" font-size="15.5" text-anchor="middle" textLength="41.6" lengthAdjust="spacingAndGlyphs" fill="#d9d1d5">2 Year</text>
<text x="1361.8" y="504.8" font-size="15.5" text-anchor="middle" textLength="41.8" lengthAdjust="spacingAndGlyphs" fill="#d9d1d5">3 Year</text>
<text x="1431.9" y="504.8" font-size="15.5" text-anchor="middle" textLength="42.1" lengthAdjust="spacingAndGlyphs" fill="#d9d1d5">4 Year</text>
<text x="1501.9" y="504.8" font-size="15.5" text-anchor="middle" textLength="41.8" lengthAdjust="spacingAndGlyphs" fill="#d9d1d5">5 year</text>
<text x="1572.2" y="504.8" font-size="15.5" text-anchor="middle" textLength="47.1" lengthAdjust="spacingAndGlyphs" fill="#d9d1d5">10 Year</text>
<text x="1642.2" y="504.8" font-size="15.5" text-anchor="middle" textLength="50.4" lengthAdjust="spacingAndGlyphs" fill="#d9d1d5">20 Year</text>
<text x="969.2" y="538.6" font-size="16.4" fill="#f6f1f4">1</text>
<text x="1048.7" y="538.6" font-size="16.4" text-anchor="end" fill="#f6f1f4">3.11%</text>
<text x="1115.7" y="538.6" font-size="16.4" text-anchor="end" fill="#f6f1f4">2.35%</text>
<text x="1190.6" y="538.6" font-size="16.4" text-anchor="end" fill="#f6f1f4">2.14%</text>
<text x="1250.7" y="538.6" font-size="16.4" text-anchor="end" fill="#f6f1f4">1.72%</text>
<text x="1321.0" y="538.6" font-size="16.4" text-anchor="end" fill="#f6f1f4">1.98%</text>
<text x="1391.4" y="538.6" font-size="16.4" text-anchor="end" fill="#f6f1f4">2.18%</text>
<text x="1461.3" y="538.6" font-size="16.4" text-anchor="end" fill="#f6f1f4">2.11%</text>
<text x="1531.2" y="538.6" font-size="16.4" text-anchor="end" fill="#f6f1f4">1.98%</text>
<text x="1601.4" y="538.6" font-size="16.4" text-anchor="end" fill="#f6f1f4">1.81%</text>
<text x="1671.5" y="538.6" font-size="16.4" text-anchor="end" fill="#f6f1f4">2.15%</text>
<text x="969.2" y="561.6" font-size="16.4" fill="#f6f1f4">5</text>
<text x="1048.7" y="561.6" font-size="16.4" text-anchor="end" fill="#f6f1f4">3.70%</text>
<text x="1115.7" y="561.6" font-size="16.4" text-anchor="end" fill="#f6f1f4">4.52%</text>
<text x="1190.6" y="561.6" font-size="16.4" text-anchor="end" fill="#f6f1f4">4.60%</text>
<text x="1250.7" y="561.6" font-size="16.4" text-anchor="end" fill="#f6f1f4">3.65%</text>
<text x="1321.0" y="561.6" font-size="16.4" text-anchor="end" fill="#f6f1f4">4.23%</text>
<text x="1391.4" y="561.6" font-size="16.4" text-anchor="end" fill="#f6f1f4">4.31%</text>
<text x="1461.3" y="561.6" font-size="16.4" text-anchor="end" fill="#f6f1f4">4.23%</text>
<text x="1531.2" y="561.6" font-size="16.4" text-anchor="end" fill="#f6f1f4">4.03%</text>
<text x="1601.4" y="561.6" font-size="16.4" text-anchor="end" fill="#f6f1f4">3.82%</text>
<text x="1671.5" y="561.6" font-size="16.4" text-anchor="end" fill="#f6f1f4">4.72%</text>
<text x="969.2" y="584.6" font-size="16.4" fill="#f6f1f4">10</text>
<text x="1048.7" y="584.6" font-size="16.4" text-anchor="end" fill="#f6f1f4">3.78%</text>
<text x="1115.7" y="584.6" font-size="16.4" text-anchor="end" fill="#f6f1f4">6.57%</text>
<text x="1190.6" y="584.6" font-size="16.4" text-anchor="end" fill="#f6f1f4">6.48%</text>
<text x="1250.7" y="584.6" font-size="16.4" text-anchor="end" fill="#f6f1f4">5.25%</text>
<text x="1321.0" y="584.6" font-size="16.4" text-anchor="end" fill="#f6f1f4">5.97%</text>
<text x="1391.4" y="584.6" font-size="16.4" text-anchor="end" fill="#f6f1f4">6.11%</text>
<text x="1461.3" y="584.6" font-size="16.4" text-anchor="end" fill="#f6f1f4">6.07%</text>
<text x="1531.2" y="584.6" font-size="16.4" text-anchor="end" fill="#f6f1f4">5.76%</text>
<text x="1601.4" y="584.6" font-size="16.4" text-anchor="end" fill="#f6f1f4">5.43%</text>
<text x="1671.5" y="584.6" font-size="16.4" text-anchor="end" fill="#f6f1f4">6.77%</text>
<text x="969.2" y="607.6" font-size="16.4" fill="#f6f1f4">20</text>
<text x="1048.7" y="607.6" font-size="16.4" text-anchor="end" fill="#f6f1f4">3.34%</text>
<text x="1115.7" y="607.6" font-size="16.4" text-anchor="end" fill="#f6f1f4">8.00%</text>
<text x="1190.6" y="607.6" font-size="16.4" text-anchor="end" fill="#f6f1f4">8.63%</text>
<text x="1250.7" y="607.6" font-size="16.4" text-anchor="end" fill="#f6f1f4">7.38%</text>
<text x="1321.0" y="607.6" font-size="16.4" text-anchor="end" fill="#f6f1f4">8.52%</text>
<text x="1391.4" y="607.6" font-size="16.4" text-anchor="end" fill="#f6f1f4">8.90%</text>
<text x="1461.3" y="607.6" font-size="16.4" text-anchor="end" fill="#f6f1f4">8.98%</text>
<text x="1531.2" y="607.6" font-size="16.4" text-anchor="end" fill="#f6f1f4">8.42%</text>
<text x="1601.4" y="607.6" font-size="16.4" text-anchor="end" fill="#f6f1f4">7.84%</text>
<text x="1671.5" y="607.6" font-size="16.4" text-anchor="end" fill="#f6f1f4">9.71%</text>
<text x="969.2" y="630.6" font-size="16.4" fill="#f6f1f4">40</text>
<text x="1048.7" y="630.6" font-size="16.4" text-anchor="end" fill="#f6f1f4">6.92%</text>
<text x="1115.7" y="630.6" font-size="16.4" text-anchor="end" fill="#f6f1f4">6.26%</text>
<text x="1190.6" y="630.6" font-size="16.4" text-anchor="end" fill="#f6f1f4">10.46%</text>
<text x="1250.7" y="630.6" font-size="16.4" text-anchor="end" fill="#f6f1f4">9.02%</text>
<text x="1321.0" y="630.6" font-size="16.4" text-anchor="end" fill="#f6f1f4">12.22%</text>
<text x="1391.4" y="630.6" font-size="16.4" text-anchor="end" fill="#f6f1f4">12.35%</text>
<text x="1461.3" y="630.6" font-size="16.4" text-anchor="end" fill="#f6f1f4">13.07%</text>
<text x="1531.2" y="630.6" font-size="16.4" text-anchor="end" fill="#f6f1f4">12.00%</text>
<text x="1601.4" y="630.6" font-size="16.4" text-anchor="end" fill="#f6f1f4">11.51%</text>
<text x="1671.5" y="630.6" font-size="16.4" text-anchor="end" fill="#f6f1f4">14.66%</text>
<text x="969.2" y="653.6" font-size="16.4" fill="#f6f1f4">60</text>
<text x="1048.7" y="653.6" font-size="16.4" text-anchor="end" fill="#f6f1f4">5.17%</text>
<text x="1115.7" y="653.6" font-size="16.4" text-anchor="end" fill="#f6f1f4">5.90%</text>
<text x="1190.6" y="653.6" font-size="16.4" text-anchor="end" fill="#f6f1f4">11.98%</text>
<text x="1250.7" y="653.6" font-size="16.4" text-anchor="end" fill="#f6f1f4">9.92%</text>
<text x="1321.0" y="653.6" font-size="16.4" text-anchor="end" fill="#f6f1f4">15.73%</text>
<text x="1391.4" y="653.6" font-size="16.4" text-anchor="end" fill="#f6f1f4">15.16%</text>
<text x="1461.3" y="653.6" font-size="16.4" text-anchor="end" fill="#f6f1f4">16.26%</text>
<text x="1531.2" y="653.6" font-size="16.4" text-anchor="end" fill="#f6f1f4">14.84%</text>
<text x="1601.4" y="653.6" font-size="16.4" text-anchor="end" fill="#f6f1f4">14.44%</text>
<text x="1671.5" y="653.6" font-size="16.4" text-anchor="end" fill="#f6f1f4">19.03%</text>
<rect x="953.6" y="707.9" width="746.9" height="376.7" rx="9" fill="none" stroke="#e9dde3" stroke-width="2"/>
<text x="1031.2" y="733.2" font-size="13.3" text-anchor="end" fill="#6f656c">100%</text>
<line x1="1043.6" y1="728.8" x2="1695" y2="728.8" stroke="#a59ca3" stroke-width="1.5" stroke-dasharray="1.5 5.75"/>
<text x="1031.2" y="809.1" font-size="13.3" text-anchor="end" fill="#6f656c">50%</text>
<line x1="1043.6" y1="804.7" x2="1695" y2="804.7" stroke="#a59ca3" stroke-width="1.5" stroke-dasharray="1.5 5.75"/>
<text x="1031.2" y="885.0" font-size="13.3" text-anchor="end" fill="#6f656c">0%</text>
<line x1="1043.6" y1="880.6" x2="1695" y2="880.6" stroke="#a59ca3" stroke-width="1.5" stroke-dasharray="1.5 5.75"/>
<text x="1031.2" y="960.9" font-size="13.3" text-anchor="end" fill="#6f656c">-50%</text>
<line x1="1043.6" y1="956.5" x2="1695" y2="956.5" stroke="#a59ca3" stroke-width="1.5" stroke-dasharray="1.5 5.75"/>
<text x="1031.2" y="1036.8" font-size="13.3" text-anchor="end" fill="#6f656c">-100%</text>
<line x1="1043.6" y1="1032.4" x2="1695" y2="1032.4" stroke="#a59ca3" stroke-width="1.5" stroke-dasharray="1.5 5.75"/>
<text x="1056.0" y="1050.8" font-size="13.3" text-anchor="middle" fill="#6f656c">0</text>
<text x="1212.3" y="1050.8" font-size="13.3" text-anchor="middle" fill="#6f656c">20</text>
<text x="1368.7" y="1050.8" font-size="13.3" text-anchor="middle" fill="#6f656c">40</text>
<text x="1525.0" y="1050.8" font-size="13.3" text-anchor="middle" fill="#6f656c">60</text>
<text x="1681.4" y="1050.8" font-size="13.3" text-anchor="middle" fill="#6f656c">80</text>
<line x1="1211.6" y1="728" x2="1211.6" y2="1033" stroke="#7f777d" stroke-width="3.2" stroke-dasharray="7 5"/>
<line x1="1368.3" y1="728" x2="1368.3" y2="1033" stroke="#7f777d" stroke-width="3.2" stroke-dasharray="7 5"/>
<line x1="1524.5" y1="728" x2="1524.5" y2="1033" stroke="#7f777d" stroke-width="3.2" stroke-dasharray="7 5"/>
<path d="M1062.1,870.6 L1064.1,869.4 L1066.1,868.3 L1068.0,867.3 L1070.0,866.4 L1072.0,865.6 L1073.9,864.7 L1075.9,863.9 L1077.8,863.2 L1079.8,862.5 L1081.8,861.8 L1083.7,861.1 L1085.7,860.4 L1087.6,859.8 L1089.6,859.2 L1091.6,858.6 L1093.5,858.0 L1095.5,857.4 L1097.4,856.8 L1099.4,856.2 L1101.4,855.7 L1103.3,855.1 L1105.3,854.5 L1107.3,854.0 L1109.2,853.5 L1111.2,852.9 L1113.1,852.4 L1115.1,851.9 L1117.1,851.4 L1119.0,850.9 L1121.0,850.4 L1122.9,849.9 L1124.9,849.4 L1126.9,849.0 L1128.8,848.5 L1130.8,848.0 L1132.8,847.6 L1134.7,847.1 L1136.7,846.7 L1138.6,846.2 L1140.6,845.8 L1142.6,845.3 L1144.5,844.9 L1146.5,844.5 L1148.4,844.1 L1150.4,843.6 L1152.4,843.2 L1154.3,842.8 L1156.3,842.4 L1158.2,842.0 L1160.2,841.6 L1162.2,841.2 L1164.1,840.8 L1166.1,840.4 L1168.1,840.0 L1170.0,839.6 L1172.0,839.2 L1173.9,838.8 L1175.9,838.4 L1177.9,838.1 L1179.8,837.7 L1181.8,837.3 L1183.7,836.9 L1185.7,836.6 L1187.7,836.2 L1189.6,835.8 L1191.6,835.5 L1193.5,835.1 L1195.5,834.7 L1197.5,834.4 L1199.4,834.0 L1201.4,833.7 L1203.4,833.3 L1205.3,833.0 L1207.3,832.6 L1209.2,832.3 L1211.2,831.9 L1213.2,831.5 L1215.1,831.2 L1217.1,830.8 L1219.0,830.4 L1221.0,830.0 L1223.0,829.6 L1224.9,829.3 L1226.9,828.9 L1228.9,828.5 L1230.8,828.1 L1232.8,827.8 L1234.7,827.4 L1236.7,827.0 L1238.7,826.7 L1240.6,826.3 L1242.6,825.9 L1244.5,825.6 L1246.5,825.2 L1248.5,824.8 L1250.4,824.5 L1252.4,824.1 L1254.3,823.8 L1256.3,823.4 L1258.3,823.1 L1260.2,822.7 L1262.2,822.4 L1264.2,822.0 L1266.1,821.7 L1268.1,821.3 L1270.0,821.0 L1272.0,820.6 L1274.0,820.3 L1275.9,819.9 L1277.9,819.6 L1279.8,819.2 L1281.8,818.9 L1283.8,818.5 L1285.7,818.2 L1287.7,817.9 L1289.6,817.5 L1291.6,817.2 L1293.6,816.9 L1295.5,816.5 L1297.5,816.2 L1299.5,815.8 L1301.4,815.5 L1303.4,815.2 L1305.3,814.9 L1307.3,814.5 L1309.3,814.2 L1311.2,813.9 L1313.2,813.5 L1315.1,813.2 L1317.1,812.9 L1319.1,812.6 L1321.0,812.2 L1323.0,811.9 L1325.0,811.6 L1326.9,811.3 L1328.9,810.9 L1330.8,810.6 L1332.8,810.3 L1334.8,810.0 L1336.7,809.7 L1338.7,809.3 L1340.6,809.0 L1342.6,808.7 L1344.6,808.4 L1346.5,808.1 L1348.5,807.8 L1350.4,807.4 L1352.4,807.1 L1354.4,806.8 L1356.3,806.5 L1358.3,806.2 L1360.3,805.9 L1362.2,805.6 L1364.2,805.3 L1366.1,805.0 L1368.1,804.6 L1370.1,804.3 L1372.0,804.0 L1374.0,803.7 L1375.9,803.3 L1377.9,803.0 L1379.9,802.7 L1381.8,802.4 L1383.8,802.0 L1385.8,801.7 L1387.7,801.4 L1389.7,801.1 L1391.6,800.7 L1393.6,800.4 L1395.6,800.1 L1397.5,799.8 L1399.5,799.4 L1401.4,799.1 L1403.4,798.8 L1405.4,798.5 L1407.3,798.2 L1409.3,797.9 L1411.2,797.5 L1413.2,797.2 L1415.2,796.9 L1417.1,796.6 L1419.1,796.3 L1421.1,796.0 L1423.0,795.6 L1425.0,795.3 L1426.9,795.0 L1428.9,794.7 L1430.9,794.4 L1432.8,794.1 L1434.8,793.8 L1436.7,793.4 L1438.7,793.1 L1440.7,792.8 L1442.6,792.5 L1444.6,792.2 L1446.5,791.9 L1448.5,791.6 L1450.5,791.3 L1452.4,791.0 L1454.4,790.7 L1456.4,790.3 L1458.3,790.0 L1460.3,789.7 L1462.2,789.4 L1464.2,789.1 L1466.2,788.8 L1468.1,788.5 L1470.1,788.2 L1472.0,787.9 L1474.0,787.6 L1476.0,787.3 L1477.9,787.0 L1479.9,786.7 L1481.9,786.4 L1483.8,786.1 L1485.8,785.8 L1487.7,785.5 L1489.7,785.2 L1491.7,784.9 L1493.6,784.6 L1495.6,784.3 L1497.5,784.0 L1499.5,783.7 L1501.5,783.4 L1503.4,783.1 L1505.4,782.8 L1507.3,782.5 L1509.3,782.2 L1511.3,781.9 L1513.2,781.6 L1515.2,781.3 L1517.2,781.0 L1519.1,780.7 L1521.1,780.4 L1523.0,780.1 L1525.0,779.8 L1527.0,779.5 L1528.9,779.3 L1530.9,779.0 L1532.8,778.7 L1534.8,778.4 L1536.8,778.1 L1538.7,777.8 L1540.7,777.6 L1542.7,777.3 L1544.6,777.0 L1546.6,776.7 L1548.5,776.4 L1550.5,776.2 L1552.5,775.9 L1554.4,775.6 L1556.4,775.3 L1558.3,775.0 L1560.3,774.8 L1562.3,774.5 L1564.2,774.2 L1566.2,773.9 L1568.1,773.7 L1570.1,773.4 L1572.1,773.1 L1574.0,772.8 L1576.0,772.6 L1578.0,772.3 L1579.9,772.0 L1581.9,771.7 L1583.8,771.5 L1585.8,771.2 L1587.8,770.9 L1589.7,770.6 L1591.7,770.4 L1593.6,770.1 L1595.6,769.8 L1597.6,769.5 L1599.5,769.3 L1601.5,769.0 L1603.4,768.7 L1605.4,768.5 L1607.4,768.2 L1609.3,767.9 L1611.3,767.6 L1613.3,767.4 L1615.2,767.1 L1617.2,766.8 L1619.1,766.6 L1621.1,766.3 L1623.1,766.0 L1625.0,765.8 L1627.0,765.5 L1628.9,765.2 L1630.9,765.0 L1632.9,764.7 L1634.8,764.4 L1636.8,764.2 L1638.8,763.9 L1640.7,763.6 L1642.7,763.4 L1644.6,763.1 L1646.6,762.8 L1648.6,762.6 L1650.5,762.3 L1652.5,762.0 L1654.4,761.8 L1656.4,761.5 L1658.4,761.2 L1660.3,761.0 L1662.3,760.7 L1664.2,760.4 L1666.2,760.2 L1668.2,759.9 L1670.1,759.7 L1672.1,759.4 L1674.1,759.1 L1676.0,758.9 L1678.0,758.6 L1679.9,758.3 L1681.9,758.1" fill="none" stroke="#e8e0e5" stroke-width="1.5" stroke-dasharray="1.5 5"/>
<path d="M1062.1,890.2 L1064.1,891.3 L1066.1,892.2 L1068.0,893.1 L1070.0,893.9 L1072.0,894.7 L1073.9,895.4 L1075.9,896.1 L1077.8,896.7 L1079.8,897.3 L1081.8,897.9 L1083.7,898.5 L1085.7,899.0 L1087.6,899.6 L1089.6,900.1 L1091.6,900.6 L1093.5,901.1 L1095.5,901.6 L1097.4,902.0 L1099.4,902.5 L1101.4,903.0 L1103.3,903.4 L1105.3,903.9 L1107.3,904.3 L1109.2,904.7 L1111.2,905.2 L1113.1,905.6 L1115.1,906.0 L1117.1,906.4 L1119.0,906.8 L1121.0,907.1 L1122.9,907.5 L1124.9,907.9 L1126.9,908.3 L1128.8,908.6 L1130.8,909.0 L1132.8,909.3 L1134.7,909.7 L1136.7,910.0 L1138.6,910.3 L1140.6,910.7 L1142.6,911.0 L1144.5,911.3 L1146.5,911.6 L1148.4,911.9 L1150.4,912.3 L1152.4,912.6 L1154.3,912.9 L1156.3,913.2 L1158.2,913.5 L1160.2,913.8 L1162.2,914.0 L1164.1,914.3 L1166.1,914.6 L1168.1,914.9 L1170.0,915.2 L1172.0,915.5 L1173.9,915.7 L1175.9,916.0 L1177.9,916.3 L1179.8,916.5 L1181.8,916.8 L1183.7,917.1 L1185.7,917.3 L1187.7,917.6 L1189.6,917.8 L1191.6,918.1 L1193.5,918.3 L1195.5,918.6 L1197.5,918.8 L1199.4,919.1 L1201.4,919.3 L1203.4,919.5 L1205.3,919.8 L1207.3,920.0 L1209.2,920.3 L1211.2,920.5 L1213.2,920.8 L1215.1,921.0 L1217.1,921.3 L1219.0,921.6 L1221.0,921.8 L1223.0,922.1 L1224.9,922.3 L1226.9,922.6 L1228.9,922.9 L1230.8,923.1 L1232.8,923.4 L1234.7,923.6 L1236.7,923.9 L1238.7,924.1 L1240.6,924.4 L1242.6,924.6 L1244.5,924.9 L1246.5,925.1 L1248.5,925.4 L1250.4,925.6 L1252.4,925.8 L1254.3,926.1 L1256.3,926.3 L1258.3,926.6 L1260.2,926.8 L1262.2,927.0 L1264.2,927.3 L1266.1,927.5 L1268.1,927.7 L1270.0,928.0 L1272.0,928.2 L1274.0,928.4 L1275.9,928.6 L1277.9,928.9 L1279.8,929.1 L1281.8,929.3 L1283.8,929.6 L1285.7,929.8 L1287.7,930.0 L1289.6,930.2 L1291.6,930.4 L1293.6,930.7 L1295.5,930.9 L1297.5,931.1 L1299.5,931.3 L1301.4,931.5 L1303.4,931.7 L1305.3,931.9 L1307.3,932.2 L1309.3,932.4 L1311.2,932.6 L1313.2,932.8 L1315.1,933.0 L1317.1,933.2 L1319.1,933.4 L1321.0,933.6 L1323.0,933.8 L1325.0,934.0 L1326.9,934.2 L1328.9,934.4 L1330.8,934.6 L1332.8,934.8 L1334.8,935.0 L1336.7,935.2 L1338.7,935.4 L1340.6,935.6 L1342.6,935.8 L1344.6,936.0 L1346.5,936.2 L1348.5,936.4 L1350.4,936.6 L1352.4,936.8 L1354.4,937.0 L1356.3,937.2 L1358.3,937.4 L1360.3,937.6 L1362.2,937.8 L1364.2,938.0 L1366.1,938.2 L1368.1,938.3 L1370.1,938.6 L1372.0,938.8 L1374.0,939.0 L1375.9,939.2 L1377.9,939.4 L1379.9,939.6 L1381.8,939.8 L1383.8,940.0 L1385.8,940.2 L1387.7,940.4 L1389.7,940.6 L1391.6,940.8 L1393.6,941.0 L1395.6,941.2 L1397.5,941.4 L1399.5,941.6 L1401.4,941.8 L1403.4,942.0 L1405.4,942.2 L1407.3,942.4 L1409.3,942.6 L1411.2,942.8 L1413.2,943.0 L1415.2,943.2 L1417.1,943.4 L1419.1,943.6 L1421.1,943.8 L1423.0,944.0 L1425.0,944.1 L1426.9,944.3 L1428.9,944.5 L1430.9,944.7 L1432.8,944.9 L1434.8,945.1 L1436.7,945.3 L1438.7,945.5 L1440.7,945.7 L1442.6,945.9 L1444.6,946.0 L1446.5,946.2 L1448.5,946.4 L1450.5,946.6 L1452.4,946.8 L1454.4,947.0 L1456.4,947.2 L1458.3,947.3 L1460.3,947.5 L1462.2,947.7 L1464.2,947.9 L1466.2,948.1 L1468.1,948.3 L1470.1,948.4 L1472.0,948.6 L1474.0,948.8 L1476.0,949.0 L1477.9,949.2 L1479.9,949.4 L1481.9,949.5 L1483.8,949.7 L1485.8,949.9 L1487.7,950.1 L1489.7,950.2 L1491.7,950.4 L1493.6,950.6 L1495.6,950.8 L1497.5,951.0 L1499.5,951.1 L1501.5,951.3 L1503.4,951.5 L1505.4,951.7 L1507.3,951.8 L1509.3,952.0 L1511.3,952.2 L1513.2,952.3 L1515.2,952.5 L1517.2,952.7 L1519.1,952.9 L1521.1,953.0 L1523.0,953.2 L1525.0,953.4 L1527.0,953.5 L1528.9,953.7 L1530.9,953.9 L1532.8,954.1 L1534.8,954.2 L1536.8,954.4 L1538.7,954.6 L1540.7,954.7 L1542.7,954.9 L1544.6,955.1 L1546.6,955.2 L1548.5,955.4 L1550.5,955.6 L1552.5,955.7 L1554.4,955.9 L1556.4,956.1 L1558.3,956.2 L1560.3,956.4 L1562.3,956.6 L1564.2,956.7 L1566.2,956.9 L1568.1,957.0 L1570.1,957.2 L1572.1,957.4 L1574.0,957.5 L1576.0,957.7 L1578.0,957.9 L1579.9,958.0 L1581.9,958.2 L1583.8,958.3 L1585.8,958.5 L1587.8,958.7 L1589.7,958.8 L1591.7,959.0 L1593.6,959.1 L1595.6,959.3 L1597.6,959.5 L1599.5,959.6 L1601.5,959.8 L1603.4,959.9 L1605.4,960.1 L1607.4,960.2 L1609.3,960.4 L1611.3,960.6 L1613.3,960.7 L1615.2,960.9 L1617.2,961.0 L1619.1,961.2 L1621.1,961.3 L1623.1,961.5 L1625.0,961.6 L1627.0,961.8 L1628.9,962.0 L1630.9,962.1 L1632.9,962.3 L1634.8,962.4 L1636.8,962.6 L1638.8,962.7 L1640.7,962.9 L1642.7,963.0 L1644.6,963.2 L1646.6,963.3 L1648.6,963.5 L1650.5,963.6 L1652.5,963.8 L1654.4,963.9 L1656.4,964.1 L1658.4,964.2 L1660.3,964.4 L1662.3,964.5 L1664.2,964.7 L1666.2,964.8 L1668.2,965.0 L1670.1,965.1 L1672.1,965.3 L1674.1,965.4 L1676.0,965.6 L1678.0,965.7 L1679.9,965.9 L1681.9,966.0" fill="none" stroke="#e8e0e5" stroke-width="1.5" stroke-dasharray="1.5 5"/>
<path d="M1062.1,873.9 L1064.1,873.0 L1066.1,872.3 L1068.0,871.6 L1070.0,871.0 L1072.0,870.4 L1073.9,869.8 L1075.9,869.3 L1077.8,868.8 L1079.8,868.3 L1081.8,867.8 L1083.7,867.3 L1085.7,866.9 L1087.6,866.4 L1089.6,866.0 L1091.6,865.6 L1093.5,865.2 L1095.5,864.8 L1097.4,864.3 L1099.4,863.9 L1101.4,863.5 L1103.3,863.1 L1105.3,862.8 L1107.3,862.4 L1109.2,862.0 L1111.2,861.6 L1113.1,861.3 L1115.1,860.9 L1117.1,860.6 L1119.0,860.2 L1121.0,859.9 L1122.9,859.5 L1124.9,859.2 L1126.9,858.8 L1128.8,858.5 L1130.8,858.2 L1132.8,857.9 L1134.7,857.5 L1136.7,857.2 L1138.6,856.9 L1140.6,856.6 L1142.6,856.3 L1144.5,856.0 L1146.5,855.7 L1148.4,855.4 L1150.4,855.1 L1152.4,854.8 L1154.3,854.5 L1156.3,854.2 L1158.2,853.9 L1160.2,853.6 L1162.2,853.3 L1164.1,853.0 L1166.1,852.8 L1168.1,852.5 L1170.0,852.2 L1172.0,851.9 L1173.9,851.6 L1175.9,851.4 L1177.9,851.1 L1179.8,850.8 L1181.8,850.6 L1183.7,850.3 L1185.7,850.0 L1187.7,849.8 L1189.6,849.5 L1191.6,849.2 L1193.5,849.0 L1195.5,848.7 L1197.5,848.5 L1199.4,848.2 L1201.4,847.9 L1203.4,847.7 L1205.3,847.4 L1207.3,847.2 L1209.2,846.9 L1211.2,846.7 L1213.2,846.4 L1215.1,846.1 L1217.1,845.9 L1219.0,845.6 L1221.0,845.3 L1223.0,845.0 L1224.9,844.8 L1226.9,844.5 L1228.9,844.2 L1230.8,844.0 L1232.8,843.7 L1234.7,843.4 L1236.7,843.2 L1238.7,842.9 L1240.6,842.6 L1242.6,842.4 L1244.5,842.1 L1246.5,841.9 L1248.5,841.6 L1250.4,841.3 L1252.4,841.1 L1254.3,840.8 L1256.3,840.6 L1258.3,840.3 L1260.2,840.1 L1262.2,839.8 L1264.2,839.5 L1266.1,839.3 L1268.1,839.0 L1270.0,838.8 L1272.0,838.5 L1274.0,838.3 L1275.9,838.0 L1277.9,837.8 L1279.8,837.5 L1281.8,837.3 L1283.8,837.0 L1285.7,836.8 L1287.7,836.6 L1289.6,836.3 L1291.6,836.1 L1293.6,835.8 L1295.5,835.6 L1297.5,835.3 L1299.5,835.1 L1301.4,834.9 L1303.4,834.6 L1305.3,834.4 L1307.3,834.1 L1309.3,833.9 L1311.2,833.6 L1313.2,833.4 L1315.1,833.2 L1317.1,832.9 L1319.1,832.7 L1321.0,832.5 L1323.0,832.2 L1325.0,832.0 L1326.9,831.8 L1328.9,831.5 L1330.8,831.3 L1332.8,831.1 L1334.8,830.8 L1336.7,830.6 L1338.7,830.4 L1340.6,830.1 L1342.6,829.9 L1344.6,829.7 L1346.5,829.4 L1348.5,829.2 L1350.4,829.0 L1352.4,828.7 L1354.4,828.5 L1356.3,828.3 L1358.3,828.1 L1360.3,827.8 L1362.2,827.6 L1364.2,827.4 L1366.1,827.2 L1368.1,826.9 L1370.1,826.7 L1372.0,826.5 L1374.0,826.2 L1375.9,826.0 L1377.9,825.7 L1379.9,825.5 L1381.8,825.3 L1383.8,825.0 L1385.8,824.8 L1387.7,824.6 L1389.7,824.3 L1391.6,824.1 L1393.6,823.8 L1395.6,823.6 L1397.5,823.4 L1399.5,823.1 L1401.4,822.9 L1403.4,822.7 L1405.4,822.4 L1407.3,822.2 L1409.3,822.0 L1411.2,821.7 L1413.2,821.5 L1415.2,821.3 L1417.1,821.0 L1419.1,820.8 L1421.1,820.6 L1423.0,820.4 L1425.0,820.1 L1426.9,819.9 L1428.9,819.7 L1430.9,819.4 L1432.8,819.2 L1434.8,819.0 L1436.7,818.8 L1438.7,818.5 L1440.7,818.3 L1442.6,818.1 L1444.6,817.8 L1446.5,817.6 L1448.5,817.4 L1450.5,817.2 L1452.4,816.9 L1454.4,816.7 L1456.4,816.5 L1458.3,816.3 L1460.3,816.0 L1462.2,815.8 L1464.2,815.6 L1466.2,815.4 L1468.1,815.1 L1470.1,814.9 L1472.0,814.7 L1474.0,814.5 L1476.0,814.2 L1477.9,814.0 L1479.9,813.8 L1481.9,813.6 L1483.8,813.4 L1485.8,813.1 L1487.7,812.9 L1489.7,812.7 L1491.7,812.5 L1493.6,812.2 L1495.6,812.0 L1497.5,811.8 L1499.5,811.6 L1501.5,811.4 L1503.4,811.1 L1505.4,810.9 L1507.3,810.7 L1509.3,810.5 L1511.3,810.3 L1513.2,810.1 L1515.2,809.8 L1517.2,809.6 L1519.1,809.4 L1521.1,809.2 L1523.0,809.0 L1525.0,808.7 L1527.0,808.5 L1528.9,808.3 L1530.9,808.1 L1532.8,807.9 L1534.8,807.7 L1536.8,807.5 L1538.7,807.3 L1540.7,807.1 L1542.7,806.9 L1544.6,806.7 L1546.6,806.5 L1548.5,806.3 L1550.5,806.1 L1552.5,805.9 L1554.4,805.6 L1556.4,805.4 L1558.3,805.2 L1560.3,805.0 L1562.3,804.8 L1564.2,804.6 L1566.2,804.4 L1568.1,804.2 L1570.1,804.0 L1572.1,803.8 L1574.0,803.6 L1576.0,803.4 L1578.0,803.2 L1579.9,803.0 L1581.9,802.8 L1583.8,802.6 L1585.8,802.4 L1587.8,802.2 L1589.7,802.0 L1591.7,801.8 L1593.6,801.6 L1595.6,801.4 L1597.6,801.2 L1599.5,801.0 L1601.5,800.8 L1603.4,800.6 L1605.4,800.4 L1607.4,800.2 L1609.3,800.0 L1611.3,799.8 L1613.3,799.6 L1615.2,799.4 L1617.2,799.2 L1619.1,799.0 L1621.1,798.8 L1623.1,798.6 L1625.0,798.4 L1627.0,798.2 L1628.9,798.0 L1630.9,797.8 L1632.9,797.6 L1634.8,797.4 L1636.8,797.2 L1638.8,797.0 L1640.7,796.8 L1642.7,796.6 L1644.6,796.4 L1646.6,796.2 L1648.6,796.0 L1650.5,795.8 L1652.5,795.7 L1654.4,795.5 L1656.4,795.3 L1658.4,795.1 L1660.3,794.9 L1662.3,794.7 L1664.2,794.5 L1666.2,794.3 L1668.2,794.1 L1670.1,793.9 L1672.1,793.7 L1674.1,793.5 L1676.0,793.3 L1678.0,793.1 L1679.9,792.9 L1681.9,792.7" fill="none" stroke="#a9f2a9" stroke-width="2" stroke-dasharray="6 5"/>
<path d="M1062.1,886.9 L1064.1,887.6 L1066.1,888.2 L1068.0,888.8 L1070.0,889.3 L1072.0,889.8 L1073.9,890.3 L1075.9,890.7 L1077.8,891.1 L1079.8,891.5 L1081.8,891.9 L1083.7,892.3 L1085.7,892.6 L1087.6,892.9 L1089.6,893.3 L1091.6,893.6 L1093.5,893.9 L1095.5,894.2 L1097.4,894.5 L1099.4,894.8 L1101.4,895.1 L1103.3,895.4 L1105.3,895.7 L1107.3,895.9 L1109.2,896.2 L1111.2,896.5 L1113.1,896.7 L1115.1,897.0 L1117.1,897.2 L1119.0,897.4 L1121.0,897.7 L1122.9,897.9 L1124.9,898.1 L1126.9,898.4 L1128.8,898.6 L1130.8,898.8 L1132.8,899.0 L1134.7,899.2 L1136.7,899.4 L1138.6,899.6 L1140.6,899.8 L1142.6,900.0 L1144.5,900.2 L1146.5,900.4 L1148.4,900.6 L1150.4,900.8 L1152.4,901.0 L1154.3,901.2 L1156.3,901.4 L1158.2,901.5 L1160.2,901.7 L1162.2,901.9 L1164.1,902.1 L1166.1,902.2 L1168.1,902.4 L1170.0,902.6 L1172.0,902.7 L1173.9,902.9 L1175.9,903.1 L1177.9,903.2 L1179.8,903.4 L1181.8,903.5 L1183.7,903.7 L1185.7,903.9 L1187.7,904.0 L1189.6,904.2 L1191.6,904.3 L1193.5,904.5 L1195.5,904.6 L1197.5,904.7 L1199.4,904.9 L1201.4,905.0 L1203.4,905.2 L1205.3,905.3 L1207.3,905.5 L1209.2,905.6 L1211.2,905.7 L1213.2,905.9 L1215.1,906.0 L1217.1,906.2 L1219.0,906.4 L1221.0,906.5 L1223.0,906.7 L1224.9,906.8 L1226.9,907.0 L1228.9,907.1 L1230.8,907.3 L1232.8,907.4 L1234.7,907.6 L1236.7,907.7 L1238.7,907.9 L1240.6,908.0 L1242.6,908.2 L1244.5,908.3 L1246.5,908.5 L1248.5,908.6 L1250.4,908.8 L1252.4,908.9 L1254.3,909.0 L1256.3,909.2 L1258.3,909.3 L1260.2,909.4 L1262.2,909.6 L1264.2,909.7 L1266.1,909.9 L1268.1,910.0 L1270.0,910.1 L1272.0,910.3 L1274.0,910.4 L1275.9,910.5 L1277.9,910.7 L1279.8,910.8 L1281.8,910.9 L1283.8,911.0 L1285.7,911.2 L1287.7,911.3 L1289.6,911.4 L1291.6,911.6 L1293.6,911.7 L1295.5,911.8 L1297.5,911.9 L1299.5,912.1 L1301.4,912.2 L1303.4,912.3 L1305.3,912.4 L1307.3,912.6 L1309.3,912.7 L1311.2,912.8 L1313.2,912.9 L1315.1,913.0 L1317.1,913.2 L1319.1,913.3 L1321.0,913.4 L1323.0,913.5 L1325.0,913.6 L1326.9,913.7 L1328.9,913.9 L1330.8,914.0 L1332.8,914.1 L1334.8,914.2 L1336.7,914.3 L1338.7,914.4 L1340.6,914.5 L1342.6,914.6 L1344.6,914.8 L1346.5,914.9 L1348.5,915.0 L1350.4,915.1 L1352.4,915.2 L1354.4,915.3 L1356.3,915.4 L1358.3,915.5 L1360.3,915.6 L1362.2,915.7 L1364.2,915.8 L1366.1,916.0 L1368.1,916.1 L1370.1,916.2 L1372.0,916.3 L1374.0,916.4 L1375.9,916.5 L1377.9,916.7 L1379.9,916.8 L1381.8,916.9 L1383.8,917.0 L1385.8,917.1 L1387.7,917.2 L1389.7,917.3 L1391.6,917.5 L1393.6,917.6 L1395.6,917.7 L1397.5,917.8 L1399.5,917.9 L1401.4,918.0 L1403.4,918.1 L1405.4,918.2 L1407.3,918.4 L1409.3,918.5 L1411.2,918.6 L1413.2,918.7 L1415.2,918.8 L1417.1,918.9 L1419.1,919.0 L1421.1,919.1 L1423.0,919.2 L1425.0,919.3 L1426.9,919.5 L1428.9,919.6 L1430.9,919.7 L1432.8,919.8 L1434.8,919.9 L1436.7,920.0 L1438.7,920.1 L1440.7,920.2 L1442.6,920.3 L1444.6,920.4 L1446.5,920.5 L1448.5,920.6 L1450.5,920.7 L1452.4,920.8 L1454.4,920.9 L1456.4,921.0 L1458.3,921.1 L1460.3,921.2 L1462.2,921.3 L1464.2,921.4 L1466.2,921.5 L1468.1,921.6 L1470.1,921.7 L1472.0,921.8 L1474.0,921.9 L1476.0,922.0 L1477.9,922.1 L1479.9,922.2 L1481.9,922.3 L1483.8,922.4 L1485.8,922.5 L1487.7,922.6 L1489.7,922.7 L1491.7,922.8 L1493.6,922.9 L1495.6,923.0 L1497.5,923.1 L1499.5,923.2 L1501.5,923.3 L1503.4,923.4 L1505.4,923.5 L1507.3,923.6 L1509.3,923.7 L1511.3,923.8 L1513.2,923.9 L1515.2,924.0 L1517.2,924.1 L1519.1,924.2 L1521.1,924.3 L1523.0,924.4 L1525.0,924.5 L1527.0,924.5 L1528.9,924.6 L1530.9,924.7 L1532.8,924.8 L1534.8,924.9 L1536.8,925.0 L1538.7,925.1 L1540.7,925.2 L1542.7,925.3 L1544.6,925.4 L1546.6,925.5 L1548.5,925.6 L1550.5,925.7 L1552.5,925.8 L1554.4,925.8 L1556.4,925.9 L1558.3,926.0 L1560.3,926.1 L1562.3,926.2 L1564.2,926.3 L1566.2,926.4 L1568.1,926.5 L1570.1,926.6 L1572.1,926.7 L1574.0,926.7 L1576.0,926.8 L1578.0,926.9 L1579.9,927.0 L1581.9,927.1 L1583.8,927.2 L1585.8,927.3 L1587.8,927.4 L1589.7,927.5 L1591.7,927.5 L1593.6,927.6 L1595.6,927.7 L1597.6,927.8 L1599.5,927.9 L1601.5,928.0 L1603.4,928.1 L1605.4,928.1 L1607.4,928.2 L1609.3,928.3 L1611.3,928.4 L1613.3,928.5 L1615.2,928.6 L1617.2,928.7 L1619.1,928.7 L1621.1,928.8 L1623.1,928.9 L1625.0,929.0 L1627.0,929.1 L1628.9,929.2 L1630.9,929.2 L1632.9,929.3 L1634.8,929.4 L1636.8,929.5 L1638.8,929.6 L1640.7,929.7 L1642.7,929.7 L1644.6,929.8 L1646.6,929.9 L1648.6,930.0 L1650.5,930.1 L1652.5,930.2 L1654.4,930.2 L1656.4,930.3 L1658.4,930.4 L1660.3,930.5 L1662.3,930.6 L1664.2,930.6 L1666.2,930.7 L1668.2,930.8 L1670.1,930.9 L1672.1,931.0 L1674.1,931.0 L1676.0,931.1 L1678.0,931.2 L1679.9,931.3 L1681.9,931.4" fill="none" stroke="#f2b6bf" stroke-width="2" stroke-dasharray="6 5"/>
<path d="M1062.1,877.1 L1064.1,876.7 L1066.1,876.3 L1068.0,875.9 L1070.0,875.6 L1072.0,875.3 L1073.9,875.0 L1075.9,874.7 L1077.8,874.4 L1079.8,874.1 L1081.8,873.8 L1083.7,873.6 L1085.7,873.3 L1087.6,873.1 L1089.6,872.8 L1091.6,872.6 L1093.5,872.4 L1095.5,872.1 L1097.4,871.9 L1099.4,871.7 L1101.4,871.4 L1103.3,871.2 L1105.3,871.0 L1107.3,870.8 L1109.2,870.6 L1111.2,870.3 L1113.1,870.1 L1115.1,869.9 L1117.1,869.7 L1119.0,869.5 L1121.0,869.3 L1122.9,869.1 L1124.9,868.9 L1126.9,868.7 L1128.8,868.5 L1130.8,868.3 L1132.8,868.2 L1134.7,868.0 L1136.7,867.8 L1138.6,867.6 L1140.6,867.4 L1142.6,867.2 L1144.5,867.0 L1146.5,866.9 L1148.4,866.7 L1150.4,866.5 L1152.4,866.3 L1154.3,866.2 L1156.3,866.0 L1158.2,865.8 L1160.2,865.6 L1162.2,865.5 L1164.1,865.3 L1166.1,865.1 L1168.1,865.0 L1170.0,864.8 L1172.0,864.6 L1173.9,864.5 L1175.9,864.3 L1177.9,864.1 L1179.8,864.0 L1181.8,863.8 L1183.7,863.6 L1185.7,863.5 L1187.7,863.3 L1189.6,863.2 L1191.6,863.0 L1193.5,862.8 L1195.5,862.7 L1197.5,862.5 L1199.4,862.4 L1201.4,862.2 L1203.4,862.1 L1205.3,861.9 L1207.3,861.8 L1209.2,861.6 L1211.2,861.4 L1213.2,861.3 L1215.1,861.1 L1217.1,860.9 L1219.0,860.8 L1221.0,860.6 L1223.0,860.5 L1224.9,860.3 L1226.9,860.1 L1228.9,860.0 L1230.8,859.8 L1232.8,859.6 L1234.7,859.5 L1236.7,859.3 L1238.7,859.2 L1240.6,859.0 L1242.6,858.8 L1244.5,858.7 L1246.5,858.5 L1248.5,858.4 L1250.4,858.2 L1252.4,858.0 L1254.3,857.9 L1256.3,857.7 L1258.3,857.6 L1260.2,857.4 L1262.2,857.2 L1264.2,857.1 L1266.1,856.9 L1268.1,856.8 L1270.0,856.6 L1272.0,856.5 L1274.0,856.3 L1275.9,856.2 L1277.9,856.0 L1279.8,855.9 L1281.8,855.7 L1283.8,855.5 L1285.7,855.4 L1287.7,855.2 L1289.6,855.1 L1291.6,854.9 L1293.6,854.8 L1295.5,854.6 L1297.5,854.5 L1299.5,854.3 L1301.4,854.2 L1303.4,854.0 L1305.3,853.9 L1307.3,853.7 L1309.3,853.6 L1311.2,853.4 L1313.2,853.3 L1315.1,853.1 L1317.1,853.0 L1319.1,852.8 L1321.0,852.7 L1323.0,852.5 L1325.0,852.4 L1326.9,852.3 L1328.9,852.1 L1330.8,852.0 L1332.8,851.8 L1334.8,851.7 L1336.7,851.5 L1338.7,851.4 L1340.6,851.2 L1342.6,851.1 L1344.6,850.9 L1346.5,850.8 L1348.5,850.6 L1350.4,850.5 L1352.4,850.4 L1354.4,850.2 L1356.3,850.1 L1358.3,849.9 L1360.3,849.8 L1362.2,849.6 L1364.2,849.5 L1366.1,849.4 L1368.1,849.2 L1370.1,849.1 L1372.0,848.9 L1374.0,848.8 L1375.9,848.6 L1377.9,848.5 L1379.9,848.3 L1381.8,848.2 L1383.8,848.0 L1385.8,847.9 L1387.7,847.7 L1389.7,847.6 L1391.6,847.4 L1393.6,847.3 L1395.6,847.1 L1397.5,847.0 L1399.5,846.8 L1401.4,846.7 L1403.4,846.5 L1405.4,846.4 L1407.3,846.2 L1409.3,846.1 L1411.2,846.0 L1413.2,845.8 L1415.2,845.7 L1417.1,845.5 L1419.1,845.4 L1421.1,845.2 L1423.0,845.1 L1425.0,844.9 L1426.9,844.8 L1428.9,844.6 L1430.9,844.5 L1432.8,844.4 L1434.8,844.2 L1436.7,844.1 L1438.7,843.9 L1440.7,843.8 L1442.6,843.6 L1444.6,843.5 L1446.5,843.3 L1448.5,843.2 L1450.5,843.1 L1452.4,842.9 L1454.4,842.8 L1456.4,842.6 L1458.3,842.5 L1460.3,842.3 L1462.2,842.2 L1464.2,842.0 L1466.2,841.9 L1468.1,841.8 L1470.1,841.6 L1472.0,841.5 L1474.0,841.3 L1476.0,841.2 L1477.9,841.1 L1479.9,840.9 L1481.9,840.8 L1483.8,840.6 L1485.8,840.5 L1487.7,840.3 L1489.7,840.2 L1491.7,840.1 L1493.6,839.9 L1495.6,839.8 L1497.5,839.6 L1499.5,839.5 L1501.5,839.4 L1503.4,839.2 L1505.4,839.1 L1507.3,838.9 L1509.3,838.8 L1511.3,838.7 L1513.2,838.5 L1515.2,838.4 L1517.2,838.2 L1519.1,838.1 L1521.1,838.0 L1523.0,837.8 L1525.0,837.7 L1527.0,837.5 L1528.9,837.4 L1530.9,837.3 L1532.8,837.1 L1534.8,837.0 L1536.8,836.9 L1538.7,836.7 L1540.7,836.6 L1542.7,836.5 L1544.6,836.4 L1546.6,836.2 L1548.5,836.1 L1550.5,836.0 L1552.5,835.8 L1554.4,835.7 L1556.4,835.6 L1558.3,835.4 L1560.3,835.3 L1562.3,835.2 L1564.2,835.0 L1566.2,834.9 L1568.1,834.8 L1570.1,834.7 L1572.1,834.5 L1574.0,834.4 L1576.0,834.3 L1578.0,834.1 L1579.9,834.0 L1581.9,833.9 L1583.8,833.7 L1585.8,833.6 L1587.8,833.5 L1589.7,833.4 L1591.7,833.2 L1593.6,833.1 L1595.6,833.0 L1597.6,832.8 L1599.5,832.7 L1601.5,832.6 L1603.4,832.5 L1605.4,832.3 L1607.4,832.2 L1609.3,832.1 L1611.3,831.9 L1613.3,831.8 L1615.2,831.7 L1617.2,831.6 L1619.1,831.4 L1621.1,831.3 L1623.1,831.2 L1625.0,831.1 L1627.0,830.9 L1628.9,830.8 L1630.9,830.7 L1632.9,830.5 L1634.8,830.4 L1636.8,830.3 L1638.8,830.2 L1640.7,830.0 L1642.7,829.9 L1644.6,829.8 L1646.6,829.7 L1648.6,829.5 L1650.5,829.4 L1652.5,829.3 L1654.4,829.2 L1656.4,829.0 L1658.4,828.9 L1660.3,828.8 L1662.3,828.7 L1664.2,828.5 L1666.2,828.4 L1668.2,828.3 L1670.1,828.1 L1672.1,828.0 L1674.1,827.9 L1676.0,827.8 L1678.0,827.6 L1679.9,827.5 L1681.9,827.4" fill="none" stroke="#a9f2a9" stroke-width="2.6"/>
<path d="M1062.1,883.7 L1064.1,884.0 L1066.1,884.3 L1068.0,884.5 L1070.0,884.8 L1072.0,885.0 L1073.9,885.2 L1075.9,885.4 L1077.8,885.6 L1079.8,885.7 L1081.8,885.9 L1083.7,886.0 L1085.7,886.2 L1087.6,886.3 L1089.6,886.5 L1091.6,886.6 L1093.5,886.7 L1095.5,886.8 L1097.4,887.0 L1099.4,887.1 L1101.4,887.2 L1103.3,887.3 L1105.3,887.4 L1107.3,887.5 L1109.2,887.6 L1111.2,887.8 L1113.1,887.9 L1115.1,887.9 L1117.1,888.0 L1119.0,888.1 L1121.0,888.2 L1122.9,888.3 L1124.9,888.4 L1126.9,888.5 L1128.8,888.6 L1130.8,888.7 L1132.8,888.7 L1134.7,888.8 L1136.7,888.9 L1138.6,889.0 L1140.6,889.0 L1142.6,889.1 L1144.5,889.2 L1146.5,889.2 L1148.4,889.3 L1150.4,889.4 L1152.4,889.4 L1154.3,889.5 L1156.3,889.6 L1158.2,889.6 L1160.2,889.7 L1162.2,889.8 L1164.1,889.8 L1166.1,889.9 L1168.1,889.9 L1170.0,890.0 L1172.0,890.0 L1173.9,890.1 L1175.9,890.1 L1177.9,890.2 L1179.8,890.2 L1181.8,890.3 L1183.7,890.3 L1185.7,890.4 L1187.7,890.4 L1189.6,890.5 L1191.6,890.5 L1193.5,890.6 L1195.5,890.6 L1197.5,890.7 L1199.4,890.7 L1201.4,890.8 L1203.4,890.8 L1205.3,890.8 L1207.3,890.9 L1209.2,890.9 L1211.2,891.0 L1213.2,891.0 L1215.1,891.1 L1217.1,891.1 L1219.0,891.2 L1221.0,891.2 L1223.0,891.3 L1224.9,891.3 L1226.9,891.4 L1228.9,891.4 L1230.8,891.5 L1232.8,891.5 L1234.7,891.5 L1236.7,891.6 L1238.7,891.6 L1240.6,891.7 L1242.6,891.7 L1244.5,891.8 L1246.5,891.8 L1248.5,891.9 L1250.4,891.9 L1252.4,891.9 L1254.3,892.0 L1256.3,892.0 L1258.3,892.1 L1260.2,892.1 L1262.2,892.1 L1264.2,892.2 L1266.1,892.2 L1268.1,892.3 L1270.0,892.3 L1272.0,892.3 L1274.0,892.4 L1275.9,892.4 L1277.9,892.4 L1279.8,892.5 L1281.8,892.5 L1283.8,892.5 L1285.7,892.6 L1287.7,892.6 L1289.6,892.7 L1291.6,892.7 L1293.6,892.7 L1295.5,892.8 L1297.5,892.8 L1299.5,892.8 L1301.4,892.9 L1303.4,892.9 L1305.3,892.9 L1307.3,892.9 L1309.3,893.0 L1311.2,893.0 L1313.2,893.0 L1315.1,893.1 L1317.1,893.1 L1319.1,893.1 L1321.0,893.2 L1323.0,893.2 L1325.0,893.2 L1326.9,893.2 L1328.9,893.3 L1330.8,893.3 L1332.8,893.3 L1334.8,893.4 L1336.7,893.4 L1338.7,893.4 L1340.6,893.4 L1342.6,893.5 L1344.6,893.5 L1346.5,893.5 L1348.5,893.5 L1350.4,893.6 L1352.4,893.6 L1354.4,893.6 L1356.3,893.6 L1358.3,893.7 L1360.3,893.7 L1362.2,893.7 L1364.2,893.7 L1366.1,893.8 L1368.1,893.8 L1370.1,893.8 L1372.0,893.8 L1374.0,893.9 L1375.9,893.9 L1377.9,893.9 L1379.9,893.9 L1381.8,894.0 L1383.8,894.0 L1385.8,894.0 L1387.7,894.1 L1389.7,894.1 L1391.6,894.1 L1393.6,894.1 L1395.6,894.2 L1397.5,894.2 L1399.5,894.2 L1401.4,894.2 L1403.4,894.3 L1405.4,894.3 L1407.3,894.3 L1409.3,894.3 L1411.2,894.4 L1413.2,894.4 L1415.2,894.4 L1417.1,894.4 L1419.1,894.5 L1421.1,894.5 L1423.0,894.5 L1425.0,894.5 L1426.9,894.6 L1428.9,894.6 L1430.9,894.6 L1432.8,894.6 L1434.8,894.7 L1436.7,894.7 L1438.7,894.7 L1440.7,894.7 L1442.6,894.7 L1444.6,894.8 L1446.5,894.8 L1448.5,894.8 L1450.5,894.8 L1452.4,894.9 L1454.4,894.9 L1456.4,894.9 L1458.3,894.9 L1460.3,894.9 L1462.2,895.0 L1464.2,895.0 L1466.2,895.0 L1468.1,895.0 L1470.1,895.0 L1472.0,895.1 L1474.0,895.1 L1476.0,895.1 L1477.9,895.1 L1479.9,895.1 L1481.9,895.1 L1483.8,895.2 L1485.8,895.2 L1487.7,895.2 L1489.7,895.2 L1491.7,895.2 L1493.6,895.3 L1495.6,895.3 L1497.5,895.3 L1499.5,895.3 L1501.5,895.3 L1503.4,895.3 L1505.4,895.4 L1507.3,895.4 L1509.3,895.4 L1511.3,895.4 L1513.2,895.4 L1515.2,895.4 L1517.2,895.5 L1519.1,895.5 L1521.1,895.5 L1523.0,895.5 L1525.0,895.5 L1527.0,895.5 L1528.9,895.6 L1530.9,895.6 L1532.8,895.6 L1534.8,895.6 L1536.8,895.6 L1538.7,895.7 L1540.7,895.7 L1542.7,895.7 L1544.6,895.7 L1546.6,895.7 L1548.5,895.7 L1550.5,895.8 L1552.5,895.8 L1554.4,895.8 L1556.4,895.8 L1558.3,895.8 L1560.3,895.8 L1562.3,895.9 L1564.2,895.9 L1566.2,895.9 L1568.1,895.9 L1570.1,895.9 L1572.1,895.9 L1574.0,896.0 L1576.0,896.0 L1578.0,896.0 L1579.9,896.0 L1581.9,896.0 L1583.8,896.0 L1585.8,896.1 L1587.8,896.1 L1589.7,896.1 L1591.7,896.1 L1593.6,896.1 L1595.6,896.1 L1597.6,896.1 L1599.5,896.2 L1601.5,896.2 L1603.4,896.2 L1605.4,896.2 L1607.4,896.2 L1609.3,896.2 L1611.3,896.2 L1613.3,896.3 L1615.2,896.3 L1617.2,896.3 L1619.1,896.3 L1621.1,896.3 L1623.1,896.3 L1625.0,896.3 L1627.0,896.4 L1628.9,896.4 L1630.9,896.4 L1632.9,896.4 L1634.8,896.4 L1636.8,896.4 L1638.8,896.4 L1640.7,896.5 L1642.7,896.5 L1644.6,896.5 L1646.6,896.5 L1648.6,896.5 L1650.5,896.5 L1652.5,896.5 L1654.4,896.5 L1656.4,896.6 L1658.4,896.6 L1660.3,896.6 L1662.3,896.6 L1664.2,896.6 L1666.2,896.6 L1668.2,896.6 L1670.1,896.6 L1672.1,896.7 L1674.1,896.7 L1676.0,896.7 L1678.0,896.7 L1679.9,896.7 L1681.9,896.7" fill="none" stroke="#f2b6bf" stroke-width="2.6"/>
<path d="M1062.1,880.4 L1064.1,880.3 L1066.1,880.3 L1068.0,880.2 L1070.0,880.2 L1072.0,880.1 L1073.9,880.1 L1075.9,880.0 L1077.8,880.0 L1079.8,879.9 L1081.8,879.9 L1083.7,879.8 L1085.7,879.7 L1087.6,879.7 L1089.6,879.6 L1091.6,879.6 L1093.5,879.5 L1095.5,879.5 L1097.4,879.4 L1099.4,879.4 L1101.4,879.3 L1103.3,879.3 L1105.3,879.2 L1107.3,879.2 L1109.2,879.1 L1111.2,879.0 L1113.1,879.0 L1115.1,878.9 L1117.1,878.9 L1119.0,878.8 L1121.0,878.8 L1122.9,878.7 L1124.9,878.7 L1126.9,878.6 L1128.8,878.6 L1130.8,878.5 L1132.8,878.4 L1134.7,878.4 L1136.7,878.3 L1138.6,878.3 L1140.6,878.2 L1142.6,878.2 L1144.5,878.1 L1146.5,878.1 L1148.4,878.0 L1150.4,877.9 L1152.4,877.9 L1154.3,877.8 L1156.3,877.8 L1158.2,877.7 L1160.2,877.7 L1162.2,877.6 L1164.1,877.6 L1166.1,877.5 L1168.1,877.4 L1170.0,877.4 L1172.0,877.3 L1173.9,877.3 L1175.9,877.2 L1177.9,877.2 L1179.8,877.1 L1181.8,877.0 L1183.7,877.0 L1185.7,876.9 L1187.7,876.9 L1189.6,876.8 L1191.6,876.8 L1193.5,876.7 L1195.5,876.7 L1197.5,876.6 L1199.4,876.5 L1201.4,876.5 L1203.4,876.4 L1205.3,876.4 L1207.3,876.3 L1209.2,876.3 L1211.2,876.2 L1213.2,876.1 L1215.1,876.1 L1217.1,876.0 L1219.0,876.0 L1221.0,875.9 L1223.0,875.9 L1224.9,875.8 L1226.9,875.7 L1228.9,875.7 L1230.8,875.6 L1232.8,875.6 L1234.7,875.5 L1236.7,875.5 L1238.7,875.4 L1240.6,875.3 L1242.6,875.3 L1244.5,875.2 L1246.5,875.2 L1248.5,875.1 L1250.4,875.0 L1252.4,875.0 L1254.3,874.9 L1256.3,874.9 L1258.3,874.8 L1260.2,874.8 L1262.2,874.7 L1264.2,874.6 L1266.1,874.6 L1268.1,874.5 L1270.0,874.5 L1272.0,874.4 L1274.0,874.3 L1275.9,874.3 L1277.9,874.2 L1279.8,874.2 L1281.8,874.1 L1283.8,874.0 L1285.7,874.0 L1287.7,873.9 L1289.6,873.9 L1291.6,873.8 L1293.6,873.8 L1295.5,873.7 L1297.5,873.6 L1299.5,873.6 L1301.4,873.5 L1303.4,873.5 L1305.3,873.4 L1307.3,873.3 L1309.3,873.3 L1311.2,873.2 L1313.2,873.2 L1315.1,873.1 L1317.1,873.0 L1319.1,873.0 L1321.0,872.9 L1323.0,872.9 L1325.0,872.8 L1326.9,872.7 L1328.9,872.7 L1330.8,872.6 L1332.8,872.6 L1334.8,872.5 L1336.7,872.5 L1338.7,872.4 L1340.6,872.3 L1342.6,872.3 L1344.6,872.2 L1346.5,872.2 L1348.5,872.1 L1350.4,872.0 L1352.4,872.0 L1354.4,871.9 L1356.3,871.9 L1358.3,871.8 L1360.3,871.7 L1362.2,871.7 L1364.2,871.6 L1366.1,871.6 L1368.1,871.5 L1370.1,871.4 L1372.0,871.4 L1374.0,871.3 L1375.9,871.3 L1377.9,871.2 L1379.9,871.1 L1381.8,871.1 L1383.8,871.0 L1385.8,871.0 L1387.7,870.9 L1389.7,870.8 L1391.6,870.8 L1393.6,870.7 L1395.6,870.6 L1397.5,870.6 L1399.5,870.5 L1401.4,870.5 L1403.4,870.4 L1405.4,870.3 L1407.3,870.3 L1409.3,870.2 L1411.2,870.2 L1413.2,870.1 L1415.2,870.0 L1417.1,870.0 L1419.1,869.9 L1421.1,869.9 L1423.0,869.8 L1425.0,869.7 L1426.9,869.7 L1428.9,869.6 L1430.9,869.6 L1432.8,869.5 L1434.8,869.4 L1436.7,869.4 L1438.7,869.3 L1440.7,869.2 L1442.6,869.2 L1444.6,869.1 L1446.5,869.1 L1448.5,869.0 L1450.5,868.9 L1452.4,868.9 L1454.4,868.8 L1456.4,868.8 L1458.3,868.7 L1460.3,868.6 L1462.2,868.6 L1464.2,868.5 L1466.2,868.5 L1468.1,868.4 L1470.1,868.3 L1472.0,868.3 L1474.0,868.2 L1476.0,868.1 L1477.9,868.1 L1479.9,868.0 L1481.9,868.0 L1483.8,867.9 L1485.8,867.8 L1487.7,867.8 L1489.7,867.7 L1491.7,867.7 L1493.6,867.6 L1495.6,867.5 L1497.5,867.5 L1499.5,867.4 L1501.5,867.3 L1503.4,867.3 L1505.4,867.2 L1507.3,867.2 L1509.3,867.1 L1511.3,867.0 L1513.2,867.0 L1515.2,866.9 L1517.2,866.8 L1519.1,866.8 L1521.1,866.7 L1523.0,866.7 L1525.0,866.6 L1527.0,866.5 L1528.9,866.5 L1530.9,866.4 L1532.8,866.4 L1534.8,866.3 L1536.8,866.3 L1538.7,866.2 L1540.7,866.1 L1542.7,866.1 L1544.6,866.0 L1546.6,866.0 L1548.5,865.9 L1550.5,865.9 L1552.5,865.8 L1554.4,865.7 L1556.4,865.7 L1558.3,865.6 L1560.3,865.6 L1562.3,865.5 L1564.2,865.5 L1566.2,865.4 L1568.1,865.3 L1570.1,865.3 L1572.1,865.2 L1574.0,865.2 L1576.0,865.1 L1578.0,865.1 L1579.9,865.0 L1581.9,864.9 L1583.8,864.9 L1585.8,864.8 L1587.8,864.8 L1589.7,864.7 L1591.7,864.7 L1593.6,864.6 L1595.6,864.6 L1597.6,864.5 L1599.5,864.4 L1601.5,864.4 L1603.4,864.3 L1605.4,864.3 L1607.4,864.2 L1609.3,864.2 L1611.3,864.1 L1613.3,864.0 L1615.2,864.0 L1617.2,863.9 L1619.1,863.9 L1621.1,863.8 L1623.1,863.8 L1625.0,863.7 L1627.0,863.6 L1628.9,863.6 L1630.9,863.5 L1632.9,863.5 L1634.8,863.4 L1636.8,863.4 L1638.8,863.3 L1640.7,863.2 L1642.7,863.2 L1644.6,863.1 L1646.6,863.1 L1648.6,863.0 L1650.5,863.0 L1652.5,862.9 L1654.4,862.8 L1656.4,862.8 L1658.4,862.7 L1660.3,862.7 L1662.3,862.6 L1664.2,862.6 L1666.2,862.5 L1668.2,862.5 L1670.1,862.4 L1672.1,862.3 L1674.1,862.3 L1676.0,862.2 L1678.0,862.2 L1679.9,862.1 L1681.9,862.1" fill="none" stroke="#2f86dd" stroke-width="3.6"/>
<path d="M1062.1,880.4 L1064.1,880.3 L1066.1,880.3 L1068.0,880.2 L1070.0,880.2 L1072.0,880.1 L1073.9,880.1 L1075.9,880.0 L1077.8,880.0 L1079.8,879.9 L1081.8,879.9 L1083.7,879.8 L1085.7,879.7 L1087.6,879.7 L1089.6,879.6 L1091.6,879.6 L1093.5,879.5 L1095.5,879.5 L1097.4,879.4 L1099.4,879.4 L1101.4,879.3 L1103.3,879.3 L1105.3,879.2 L1107.3,879.2 L1109.2,879.1 L1111.2,879.0 L1113.1,879.0 L1115.1,878.9 L1117.1,878.9 L1119.0,878.8 L1121.0,878.8 L1122.9,878.7 L1124.9,878.7 L1126.9,878.6 L1128.8,878.6 L1130.8,878.5 L1132.8,878.4 L1134.7,878.4 L1136.7,878.3 L1138.6,878.3 L1140.6,878.2 L1142.6,878.2 L1144.5,878.1 L1146.5,878.1 L1148.4,878.0 L1150.4,877.9 L1152.4,877.9 L1154.3,877.8 L1156.3,877.8 L1158.2,877.7 L1160.2,877.7 L1162.2,877.6 L1164.1,877.6 L1166.1,877.5 L1168.1,877.4 L1170.0,877.4 L1172.0,877.3 L1173.9,877.3 L1175.9,877.2 L1177.9,877.2 L1179.8,877.1 L1181.8,877.0 L1183.7,877.0 L1185.7,876.9 L1187.7,876.9 L1189.6,876.8 L1191.6,876.8 L1193.5,876.7 L1195.5,876.7 L1197.5,876.6 L1199.4,876.5 L1201.4,876.5 L1203.4,876.4 L1205.3,876.4 L1207.3,876.3 L1209.2,876.3 L1211.2,876.2 L1213.2,876.1 L1215.1,876.1 L1217.1,876.0 L1219.0,876.0 L1221.0,875.9 L1223.0,875.9 L1224.9,875.8 L1226.9,875.7 L1228.9,875.7 L1230.8,875.6 L1232.8,875.6 L1234.7,875.5 L1236.7,875.5 L1238.7,875.4 L1240.6,875.3 L1242.6,875.3 L1244.5,875.2 L1246.5,875.2 L1248.5,875.1 L1250.4,875.0 L1252.4,875.0 L1254.3,874.9 L1256.3,874.9 L1258.3,874.8 L1260.2,874.8 L1262.2,874.7 L1264.2,874.6 L1266.1,874.6 L1268.1,874.5 L1270.0,874.5 L1272.0,874.4 L1274.0,874.3 L1275.9,874.3 L1277.9,874.2 L1279.8,874.2 L1281.8,874.1 L1283.8,874.0 L1285.7,874.0 L1287.7,873.9 L1289.6,873.9 L1291.6,873.8 L1293.6,873.8 L1295.5,873.7 L1297.5,873.6 L1299.5,873.6 L1301.4,873.5 L1303.4,873.5 L1305.3,873.4 L1307.3,873.3 L1309.3,873.3 L1311.2,873.2 L1313.2,873.2 L1315.1,873.1 L1317.1,873.0 L1319.1,873.0 L1321.0,872.9 L1323.0,872.9 L1325.0,872.8 L1326.9,872.7 L1328.9,872.7 L1330.8,872.6 L1332.8,872.6 L1334.8,872.5 L1336.7,872.5 L1338.7,872.4 L1340.6,872.3 L1342.6,872.3 L1344.6,872.2 L1346.5,872.2 L1348.5,872.1 L1350.4,872.0 L1352.4,872.0 L1354.4,871.9 L1356.3,871.9 L1358.3,871.8 L1360.3,871.7 L1362.2,871.7 L1364.2,871.6 L1366.1,871.6 L1368.1,871.5 L1370.1,871.4 L1372.0,871.4 L1374.0,871.3 L1375.9,871.3 L1377.9,871.2 L1379.9,871.1 L1381.8,871.1 L1383.8,871.0 L1385.8,871.0 L1387.7,870.9 L1389.7,870.8 L1391.6,870.8 L1393.6,870.7 L1395.6,870.6 L1397.5,870.6 L1399.5,870.5 L1401.4,870.5 L1403.4,870.4 L1405.4,870.3 L1407.3,870.3 L1409.3,870.2 L1411.2,870.2 L1413.2,870.1 L1415.2,870.0 L1417.1,870.0 L1419.1,869.9 L1421.1,869.9 L1423.0,869.8 L1425.0,869.7 L1426.9,869.7 L1428.9,869.6 L1430.9,869.6 L1432.8,869.5 L1434.8,869.4 L1436.7,869.4 L1438.7,869.3 L1440.7,869.2 L1442.6,869.2 L1444.6,869.1 L1446.5,869.1 L1448.5,869.0 L1450.5,868.9 L1452.4,868.9 L1454.4,868.8 L1456.4,868.8 L1458.3,868.7 L1460.3,868.6 L1462.2,868.6 L1464.2,868.5 L1466.2,868.5 L1468.1,868.4 L1470.1,868.3 L1472.0,868.3 L1474.0,868.2 L1476.0,868.1 L1477.9,868.1 L1479.9,868.0 L1481.9,868.0 L1483.8,867.9 L1485.8,867.8 L1487.7,867.8 L1489.7,867.7 L1491.7,867.7 L1493.6,867.6 L1495.6,867.5 L1497.5,867.5 L1499.5,867.4 L1501.5,867.3 L1503.4,867.3 L1505.4,867.2 L1507.3,867.2 L1509.3,867.1 L1511.3,867.0 L1513.2,867.0 L1515.2,866.9 L1517.2,866.8 L1519.1,866.8 L1521.1,866.7 L1523.0,866.7 L1525.0,866.6 L1527.0,866.5 L1528.9,866.5 L1530.9,866.4 L1532.8,866.4 L1534.8,866.3 L1536.8,866.3 L1538.7,866.2 L1540.7,866.1 L1542.7,866.1 L1544.6,866.0 L1546.6,866.0 L1548.5,865.9 L1550.5,865.9 L1552.5,865.8 L1554.4,865.7 L1556.4,865.7 L1558.3,865.6 L1560.3,865.6 L1562.3,865.5 L1564.2,865.5 L1566.2,865.4 L1568.1,865.3 L1570.1,865.3 L1572.1,865.2 L1574.0,865.2 L1576.0,865.1 L1578.0,865.1 L1579.9,865.0 L1581.9,864.9 L1583.8,864.9 L1585.8,864.8 L1587.8,864.8 L1589.7,864.7 L1591.7,864.7 L1593.6,864.6 L1595.6,864.6 L1597.6,864.5 L1599.5,864.4 L1601.5,864.4 L1603.4,864.3 L1605.4,864.3 L1607.4,864.2 L1609.3,864.2 L1611.3,864.1 L1613.3,864.0 L1615.2,864.0 L1617.2,863.9 L1619.1,863.9 L1621.1,863.8 L1623.1,863.8 L1625.0,863.7 L1627.0,863.6 L1628.9,863.6 L1630.9,863.5 L1632.9,863.5 L1634.8,863.4 L1636.8,863.4 L1638.8,863.3 L1640.7,863.2 L1642.7,863.2 L1644.6,863.1 L1646.6,863.1 L1648.6,863.0 L1650.5,863.0 L1652.5,862.9 L1654.4,862.8 L1656.4,862.8 L1658.4,862.7 L1660.3,862.7 L1662.3,862.6 L1664.2,862.6 L1666.2,862.5 L1668.2,862.5 L1670.1,862.4 L1672.1,862.3 L1674.1,862.3 L1676.0,862.2 L1678.0,862.2 L1679.9,862.1 L1681.9,862.1" fill="none" stroke="#ffffff" stroke-width="1.8" stroke-dasharray="4 8" stroke-dashoffset="-2"/>
</svg></body></html>
